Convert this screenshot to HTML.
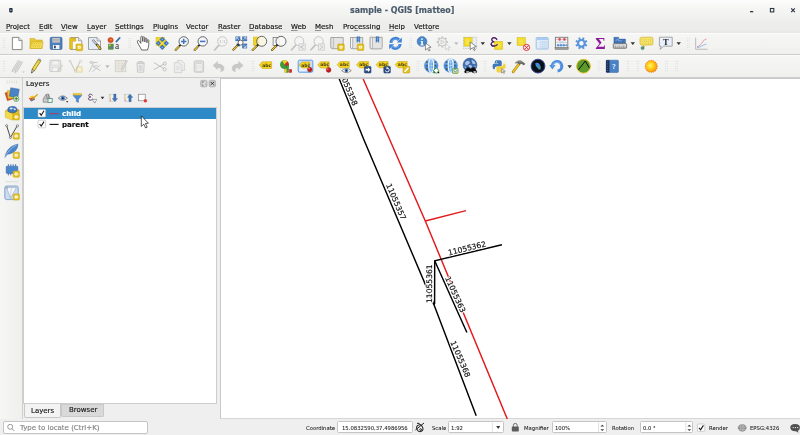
<!DOCTYPE html>
<html><head><meta charset="utf-8"><title>sample - QGIS [matteo]</title>
<style>
*{box-sizing:border-box;margin:0;padding:0}
html,body{width:800px;height:435px;overflow:hidden;background:#efefef;font-family:"DejaVu Sans","Liberation Sans",sans-serif;font-size:7px;color:#1a1a1a}
.abs{position:absolute}
.tx{position:absolute;white-space:nowrap;line-height:1.164;transform:scale(0.41667);transform-origin:0 0;-webkit-text-stroke:0.4px currentColor}
.tx u{text-decoration:underline;text-decoration-thickness:1.2px;text-underline-offset:1.6px}
#title{left:0;top:0;width:800px;height:20px;background:linear-gradient(#fdfdfd,#f6f6f5 40%,#f0f0ef)}
#menu{left:0;top:20px;width:800px;height:12.5px;background:linear-gradient(#eeeeed,#ececeb 80%,#e6e6e5)}
.tb{left:0;width:800px;background:linear-gradient(#f6f6f5,#f0f0ef);border-top:1px solid #fcfcfc;border-bottom:1px solid #cdcdcd}
#tb1{top:32.5px;height:22.8px}
#tb2{top:55.3px;height:22.7px}
#left{left:0;top:78px;width:23px;height:341px;background:linear-gradient(90deg,#f6f6f5,#efefee);border-right:1px solid #cfcfcf}
#canvas{left:220px;top:78px;width:580px;height:341.4px;background:#fff;border-left:1px solid #c8c8c8;border-top:1px solid #c8c8c8;border-bottom:1.4px solid #d6d6d6}
#tree{left:23px;top:107px;width:194px;height:297px;background:#fff;border:1px solid #cdcdcd}
#sel{left:24px;top:108px;width:192px;height:11px;background:#2e89c7}
.box{position:absolute;background:#fff;border:1px solid #c4c4c4;border-radius:1.5px}
</style></head><body><div id="root" style="position:absolute;left:0;top:0;width:800px;height:435px;will-change:transform;transform:translateZ(0)">
<div id="title" class="abs"></div>
<div class="tx" style="left:349.7px;top:5.37px;font-size:18.96px;font-weight:bold;color:#4b5b6c;">sample - QGIS [matteo]</div>
<div id="menu" class="abs"></div>
<div class="tx" style="left:6px;top:22.70px;font-size:16.80px;font-weight:normal;color:#161616;"><u>P</u>roject</div><div class="tx" style="left:39.2px;top:22.70px;font-size:16.80px;font-weight:normal;color:#161616;"><u>E</u>dit</div><div class="tx" style="left:61.4px;top:22.70px;font-size:16.80px;font-weight:normal;color:#161616;"><u>V</u>iew</div><div class="tx" style="left:86.7px;top:22.70px;font-size:16.80px;font-weight:normal;color:#161616;"><u>L</u>ayer</div><div class="tx" style="left:115px;top:22.70px;font-size:16.80px;font-weight:normal;color:#161616;"><u>S</u>ettings</div><div class="tx" style="left:152.5px;top:22.70px;font-size:16.80px;font-weight:normal;color:#161616;"><u>P</u>lugins</div><div class="tx" style="left:186.3px;top:22.70px;font-size:16.80px;font-weight:normal;color:#161616;">Vect<u>o</u>r</div><div class="tx" style="left:217.7px;top:22.70px;font-size:16.80px;font-weight:normal;color:#161616;"><u>R</u>aster</div><div class="tx" style="left:248.8px;top:22.70px;font-size:16.80px;font-weight:normal;color:#161616;"><u>D</u>atabase</div><div class="tx" style="left:291px;top:22.70px;font-size:16.80px;font-weight:normal;color:#161616;"><u>W</u>eb</div><div class="tx" style="left:315.3px;top:22.70px;font-size:16.80px;font-weight:normal;color:#161616;"><u>M</u>esh</div><div class="tx" style="left:342.9px;top:22.70px;font-size:16.80px;font-weight:normal;color:#161616;">Pro<u>c</u>essing</div><div class="tx" style="left:389px;top:22.70px;font-size:16.80px;font-weight:normal;color:#161616;"><u>H</u>elp</div><div class="tx" style="left:414px;top:22.70px;font-size:16.80px;font-weight:normal;color:#161616;">Vett<u>o</u>re</div>
<div id="tb1" class="abs tb"></div>
<div id="tb2" class="abs tb"></div>
<div id="left" class="abs"></div>
<div class="tx" style="left:26px;top:80.01px;font-size:17.04px;font-weight:normal;color:#1a1a1a;">Layers</div>
<div id="tree" class="abs"></div>
<div id="sel" class="abs"></div>
<div class="tx" style="left:62.4px;top:109.71px;font-size:17.04px;font-weight:bold;color:#fff;">child</div>
<div class="tx" style="left:62.4px;top:120.51px;font-size:17.04px;font-weight:bold;color:#111;">parent</div>
<div class="abs" style="left:24px;top:404px;width:37px;height:14.4px;background:#f3f3f3;border:1px solid #c8c8c8;border-top:none;border-radius:0 0 2px 2px"></div>
<div class="abs" style="left:61px;top:404px;width:42.8px;height:12.8px;background:#d9d9d9;border:1px solid #c8c8c8;border-top:1px solid #cccccc;border-radius:0 0 2px 2px"></div>
<div class="tx" style="left:30.6px;top:407.00px;font-size:16.80px;font-weight:normal;color:#1a1a1a;">Layers</div>
<div class="tx" style="left:68.5px;top:406.40px;font-size:16.80px;font-weight:normal;color:#1a1a1a;">Browser</div>
<div id="canvas" class="abs">
<svg width="579" height="340" viewBox="221 79 579 340" style="position:absolute;left:0;top:0">
<g fill="none" stroke-width="1.45" stroke-linecap="butt" stroke-linejoin="miter">
<path d="M363.1 78.8 L425.3 221 L507.3 419" stroke="#e31a1c"/>
<path d="M425.3 221 L466 210.6" stroke="#e31a1c"/>
<path d="M339.2 78.8 L364 140 L433.9 304.6 L476.2 415.8" stroke="#000"/>
<path d="M501.9 244.7 L434.7 260.8 L434.6 303.6 L433.9 304.6" stroke="#000"/>
<path d="M434.7 260.8 L466.9 332.5" stroke="#000"/>
</g>
<g font-family="DejaVu Sans, Liberation Sans, sans-serif" font-size="7.6" fill="#fff" text-anchor="middle" stroke="#fff" stroke-width="2.2" stroke-linejoin="round">
<text transform="translate(348,87.2) rotate(67.4)" y="2.75">11055358</text>
<text transform="translate(396.2,201.7) rotate(66.5)" y="2.75">11055357</text>
<text transform="translate(467,248.2) rotate(-13.5)" y="2.75">11055362</text>
<text transform="translate(428.9,283.7) rotate(-90)" y="2.75">11055361</text>
<text transform="translate(455.6,294.5) rotate(65.6)" y="2.75">11055363</text>
<text transform="translate(460.6,359) rotate(66.5)" y="2.75">11055368</text>
</g>
<g font-family="DejaVu Sans, Liberation Sans, sans-serif" font-size="7.6" fill="#111" text-anchor="middle" stroke="#111" stroke-width="0.18">
<text transform="translate(348,87.2) rotate(67.4)" y="2.75">11055358</text>
<text transform="translate(396.2,201.7) rotate(66.5)" y="2.75">11055357</text>
<text transform="translate(467,248.2) rotate(-13.5)" y="2.75">11055362</text>
<text transform="translate(428.9,283.7) rotate(-90)" y="2.75">11055361</text>
<text transform="translate(455.6,294.5) rotate(65.6)" y="2.75">11055363</text>
<text transform="translate(460.6,359) rotate(66.5)" y="2.75">11055368</text>
</g>
</svg>
</div>
<div class="box" style="left:3px;top:421px;width:145px;height:13px;border-radius:2px"></div>
<div class="box" style="left:337.4px;top:421.4px;width:75.6px;height:11.8px"></div>
<div class="box" style="left:448.4px;top:421.4px;width:56px;height:11.8px"></div>
<div class="box" style="left:551.6px;top:421.4px;width:55px;height:11.8px"></div>
<div class="box" style="left:640.2px;top:421.4px;width:52.8px;height:11.8px"></div>
<div class="tx" style="left:20px;top:423.70px;font-size:16.80px;font-weight:normal;color:#858585;">Type to locate (Ctrl+K)</div><div class="tx" style="left:305.8px;top:424.58px;font-size:12.72px;font-weight:normal;color:#1a1a1a;-webkit-text-stroke:0.15px currentColor;">Coordinate</div><div class="tx" style="left:341.6px;top:424.78px;font-size:12.72px;font-weight:normal;color:#1a1a1a;-webkit-text-stroke:0.15px currentColor;">15.0832590,37.4986956</div><div class="tx" style="left:432px;top:424.58px;font-size:12.72px;font-weight:normal;color:#1a1a1a;-webkit-text-stroke:0.15px currentColor;">Scale</div><div class="tx" style="left:451px;top:424.78px;font-size:12.72px;font-weight:normal;color:#1a1a1a;-webkit-text-stroke:0.15px currentColor;">1:92</div><div class="tx" style="left:524.2px;top:424.58px;font-size:12.72px;font-weight:normal;color:#1a1a1a;-webkit-text-stroke:0.15px currentColor;">Magnifier</div><div class="tx" style="left:555px;top:424.78px;font-size:12.72px;font-weight:normal;color:#1a1a1a;-webkit-text-stroke:0.15px currentColor;">100%</div><div class="tx" style="left:612.4px;top:424.58px;font-size:12.72px;font-weight:normal;color:#1a1a1a;-webkit-text-stroke:0.15px currentColor;">Rotation</div><div class="tx" style="left:643.2px;top:424.78px;font-size:12.72px;font-weight:normal;color:#1a1a1a;-webkit-text-stroke:0.15px currentColor;">0.0 °</div><div class="tx" style="left:708.8px;top:424.58px;font-size:12.72px;font-weight:normal;color:#1a1a1a;-webkit-text-stroke:0.15px currentColor;">Render</div><div class="tx" style="left:749.8px;top:424.58px;font-size:12.72px;font-weight:normal;color:#1a1a1a;-webkit-text-stroke:0.15px currentColor;">EPSG:4326</div>
<svg class="abs" id="icons" width="800" height="435" viewBox="0 0 800 435" style="left:0;top:0;pointer-events:none;filter:blur(0.3px)">
<rect x="3.0" y="38.2" width="0.9" height="0.9" fill="#d2d2d2"/><rect x="4.6" y="38.2" width="0.9" height="0.9" fill="#d2d2d2"/><rect x="3.5" y="38.8" width="0.8" height="0.7" fill="#fbfbfb"/><rect x="5.1" y="38.8" width="0.8" height="0.7" fill="#fbfbfb"/><rect x="3.0" y="40.5" width="0.9" height="0.9" fill="#d2d2d2"/><rect x="4.6" y="40.5" width="0.9" height="0.9" fill="#d2d2d2"/><rect x="3.5" y="41.1" width="0.8" height="0.7" fill="#fbfbfb"/><rect x="5.1" y="41.1" width="0.8" height="0.7" fill="#fbfbfb"/><rect x="3.0" y="42.8" width="0.9" height="0.9" fill="#d2d2d2"/><rect x="4.6" y="42.8" width="0.9" height="0.9" fill="#d2d2d2"/><rect x="3.5" y="43.4" width="0.8" height="0.7" fill="#fbfbfb"/><rect x="5.1" y="43.4" width="0.8" height="0.7" fill="#fbfbfb"/><rect x="3.0" y="45.1" width="0.9" height="0.9" fill="#d2d2d2"/><rect x="4.6" y="45.1" width="0.9" height="0.9" fill="#d2d2d2"/><rect x="3.5" y="45.7" width="0.8" height="0.7" fill="#fbfbfb"/><rect x="5.1" y="45.7" width="0.8" height="0.7" fill="#fbfbfb"/><rect x="3.0" y="47.4" width="0.9" height="0.9" fill="#d2d2d2"/><rect x="4.6" y="47.4" width="0.9" height="0.9" fill="#d2d2d2"/><rect x="3.5" y="48.0" width="0.8" height="0.7" fill="#fbfbfb"/><rect x="5.1" y="48.0" width="0.8" height="0.7" fill="#fbfbfb"/>
<path d="M12.4 37.4 h6.4 l3.2 3.2 v9 h-9.6 z" fill="#fff" stroke="#6f6f6f" stroke-width="0.8" stroke-linejoin="round"/><path d="M18.8 37.4 v3.2 h3.2" fill="#e4e4e4" stroke="#6f6f6f" stroke-width="0.7" stroke-linejoin="round"/>
<path d="M30 38.4 h4.6 l1.2 1.6 h6.4 v8.4 h-12.2 z" fill="#e9c936" stroke="#c4a21a" stroke-width="0.5"/><path d="M29.9 48.5 l1.8 -6.6 h11.5 l-1.6 6.6 z" fill="#f4dc55" stroke="#c4a21a" stroke-width="0.5" stroke-linejoin="round"/><g fill="#cfae2a"><rect x="32.2" y="43.2" width="0.8" height="0.7"/><rect x="31.9" y="44.8" width="0.8" height="0.7"/><rect x="31.5" y="46.4" width="0.8" height="0.7"/><rect x="34.1" y="43.2" width="0.8" height="0.7"/><rect x="33.8" y="44.8" width="0.8" height="0.7"/><rect x="33.4" y="46.4" width="0.8" height="0.7"/><rect x="36.0" y="43.2" width="0.8" height="0.7"/><rect x="35.6" y="44.8" width="0.8" height="0.7"/><rect x="35.3" y="46.4" width="0.8" height="0.7"/><rect x="37.9" y="43.2" width="0.8" height="0.7"/><rect x="37.6" y="44.8" width="0.8" height="0.7"/><rect x="37.2" y="46.4" width="0.8" height="0.7"/><rect x="39.8" y="43.2" width="0.8" height="0.7"/><rect x="39.5" y="44.8" width="0.8" height="0.7"/><rect x="39.1" y="46.4" width="0.8" height="0.7"/></g>
<rect x="50.2" y="37.3" width="11.8" height="12.2" rx="1.3" fill="#4f7fbb" stroke="#3a659c" stroke-width="0.7"/><rect x="52.4" y="38" width="7.4" height="4.6" fill="#cfcfcf"/><line x1="53" y1="39.3" x2="59.2" y2="39.3" stroke="#8f8f8f" stroke-width="0.6"/><line x1="53" y1="40.9" x2="59.2" y2="40.9" stroke="#8f8f8f" stroke-width="0.6"/><rect x="53" y="45" width="6.4" height="4" fill="#f4f4f4"/><rect x="54" y="45.7" width="1.8" height="2.6" fill="#2b466d"/>
<path d="M70.8 37.5 h7.6 l3.4 3.4 v8.6 h-11 z" fill="#fff" stroke="#7a7a7a" stroke-width="0.7"/><path d="M78.4 37.5 v3.4 h3.4" fill="#e6e6e6" stroke="#7a7a7a" stroke-width="0.6"/><path d="M69.6 37.9 h6.2 v3.4 h-3.3 v7.8 h-2.9 z" fill="#e6c325" stroke="#c2a012" stroke-width="0.5"/><g stroke="#b99a10" stroke-width="0.4"><line x1="70" y1="42.5" x2="71" y2="42.5"/><line x1="70" y1="44.7" x2="71" y2="44.7"/><line x1="70" y1="46.9" x2="71" y2="46.9"/><line x1="73.4" y1="38.6" x2="73.4" y2="39.6"/><line x1="74.8" y1="38.6" x2="74.8" y2="39.6"/></g><g opacity="1"><rect x="75.9" y="43.9" width="6.8" height="6.8" rx="0.9" fill="#e2bd18" stroke="#c8a414" stroke-width="0.5"/><polygon points="81.56,48.24 80.18,48.18 80.24,49.56 79.30,48.55 78.36,49.56 78.42,48.18 77.04,48.24 78.05,47.30 77.04,46.36 78.42,46.42 78.36,45.04 79.30,46.05 80.24,45.04 80.18,46.42 81.56,46.36 80.55,47.30" fill="#fffbe6"/><circle cx="79.30000000000001" cy="47.3" r="0.6" fill="#ecd460"/></g>
<path d="M88.5 37.6 h8.6 l3.4 3.4 v8.4 h-12 z" fill="#f0f5fb" stroke="#7a7a7a" stroke-width="0.7"/><path d="M97.1 37.6 v3.4 h3.4" fill="#dfe6ee" stroke="#7a7a7a" stroke-width="0.6"/><rect x="89.6" y="39" width="6" height="8.8" fill="#e1ecf8"/><line x1="93.4" y1="40.6" x2="97.2" y2="45" stroke="#555" stroke-width="2.2" stroke-linecap="round"/><line x1="93.4" y1="40.6" x2="97.2" y2="45" stroke="#e9e9e9" stroke-width="1.1" stroke-linecap="round"/><line x1="97.2" y1="45" x2="100.2" y2="48.8" stroke="#3b3b2a" stroke-width="2.5" stroke-linecap="round"/><line x1="97.4" y1="45.2" x2="100.1" y2="48.7" stroke="#e6bf1f" stroke-width="1.4" stroke-linecap="round"/>
<circle cx="110.6" cy="40.1" r="2.7" fill="#d8531f" stroke="#b03c10" stroke-width="0.4"/><circle cx="110.9" cy="39.8" r="0.8" fill="#f0a060"/><line x1="116.3" y1="41.6" x2="119.7" y2="37.9" stroke="#3e6fb2" stroke-width="1.7" stroke-linecap="round"/><rect x="108.2" y="44" width="5.2" height="5.3" fill="#5f9448" stroke="#4a7a3a" stroke-width="0.4"/><rect x="108.8" y="44.5" width="1.8" height="1.6" fill="#d8c84a"/><rect x="111" y="46.6" width="1.8" height="1.8" fill="#4a78b8"/><text x="115" y="49.1" font-size="9.4" font-family="Liberation Serif, serif" fill="#2a2a2a">a</text>
<rect x="128.6" y="38.2" width="0.9" height="0.9" fill="#d2d2d2"/><rect x="130.2" y="38.2" width="0.9" height="0.9" fill="#d2d2d2"/><rect x="129.1" y="38.8" width="0.8" height="0.7" fill="#fbfbfb"/><rect x="130.7" y="38.8" width="0.8" height="0.7" fill="#fbfbfb"/><rect x="128.6" y="40.5" width="0.9" height="0.9" fill="#d2d2d2"/><rect x="130.2" y="40.5" width="0.9" height="0.9" fill="#d2d2d2"/><rect x="129.1" y="41.1" width="0.8" height="0.7" fill="#fbfbfb"/><rect x="130.7" y="41.1" width="0.8" height="0.7" fill="#fbfbfb"/><rect x="128.6" y="42.8" width="0.9" height="0.9" fill="#d2d2d2"/><rect x="130.2" y="42.8" width="0.9" height="0.9" fill="#d2d2d2"/><rect x="129.1" y="43.4" width="0.8" height="0.7" fill="#fbfbfb"/><rect x="130.7" y="43.4" width="0.8" height="0.7" fill="#fbfbfb"/><rect x="128.6" y="45.1" width="0.9" height="0.9" fill="#d2d2d2"/><rect x="130.2" y="45.1" width="0.9" height="0.9" fill="#d2d2d2"/><rect x="129.1" y="45.7" width="0.8" height="0.7" fill="#fbfbfb"/><rect x="130.7" y="45.7" width="0.8" height="0.7" fill="#fbfbfb"/><rect x="128.6" y="47.4" width="0.9" height="0.9" fill="#d2d2d2"/><rect x="130.2" y="47.4" width="0.9" height="0.9" fill="#d2d2d2"/><rect x="129.1" y="48.0" width="0.8" height="0.7" fill="#fbfbfb"/><rect x="130.7" y="48.0" width="0.8" height="0.7" fill="#fbfbfb"/>
<path d="M141.6 50 C141 48 139.6 46.4 138.4 44.2 C137.4 42.4 137 41 137.8 40.5 C138.6 40 139.6 41 140.8 43.4 L140.8 37.2 C140.8 36 142.6 36 142.6 37.2 L142.8 41.6 L142.9 37.6 C142.9 36.4 144.7 36.5 144.7 37.7 L144.9 42 L145.1 38.8 C145.2 37.7 146.8 37.8 146.8 38.9 L146.9 42.8 L147.2 40.4 C147.3 39.3 148.8 39.5 148.8 40.6 C148.8 44 148.9 47 147.4 50 Z" fill="#fff" stroke="#454545" stroke-width="0.8" stroke-linejoin="round"/>
<rect x="156" y="37.2" width="8.6" height="8.4" fill="#f0d42a" stroke="#d2b21e" stroke-width="0.4"/><path d="M162.3 36.7 L169 43.3 L162.3 50.1 L155.7 43.3 Z" fill="#3f74b8"/><path d="M159 40 L165.6 46.6 M165.6 40 L159 46.6" stroke="#f0d42a" stroke-width="1.7"/><path d="M162.3 41.5 l1.8 1.8 l-1.8 1.8 l-1.8 -1.8 z" fill="#f4dc3a"/><g fill="#8fb4e4"><circle cx="162.3" cy="39.2" r="0.7"/><circle cx="162.3" cy="47.5" r="0.7"/><circle cx="158.2" cy="43.3" r="0.7"/><circle cx="166.5" cy="43.3" r="0.7"/></g>
<line x1="180.5" y1="44.8" x2="175.6" y2="50.0" stroke="#222" stroke-width="1.9" stroke-linecap="round"/><line x1="179.0" y1="46.4" x2="175.6" y2="50.0" stroke="#edc31f" stroke-width="1.3" stroke-linecap="round"/><circle cx="183.7" cy="41.4" r="4.7" fill="#f3f7fb" stroke="#454545" stroke-width="0.8"/><path d="M181 41.4 h5.4 M183.7 38.7 v5.4" stroke="#3f74b8" stroke-width="1.5"/>
<line x1="199.5" y1="44.8" x2="194.6" y2="50.0" stroke="#222" stroke-width="1.9" stroke-linecap="round"/><line x1="198.0" y1="46.4" x2="194.6" y2="50.0" stroke="#edc31f" stroke-width="1.3" stroke-linecap="round"/><circle cx="202.7" cy="41.4" r="4.7" fill="#f3f7fb" stroke="#454545" stroke-width="0.8"/><path d="M200 41.4 h5.4" stroke="#3f74b8" stroke-width="1.5"/>
<line x1="219.2" y1="44.9" x2="214.6" y2="50.0" stroke="#c2c2c2" stroke-width="1.7" stroke-linecap="round"/><circle cx="222.3" cy="41.4" r="4.7" fill="#f4f4f4" stroke="#bdbdbd" stroke-width="0.8"/><text x="222.3" y="43" font-size="4.2" text-anchor="middle" fill="#b4b4b4" font-family="DejaVu Sans, Liberation Sans, sans-serif">1:1</text>
<g fill="#3f74b8"><rect x="235.4" y="36.4" width="4.9" height="4.7"/><rect x="242.2" y="36.4" width="4.9" height="4.7"/><rect x="242.2" y="43.6" width="4.9" height="4.8"/><rect x="236.6" y="43.6" width="3.4" height="2.6"/></g><g stroke="#dfe9f5" stroke-width="0.7" fill="none"><path d="M236.3 39.6 v-2.3 h2.3 M236.5 37.5 l2.6 2.4"/><path d="M246.1 39.6 v-2.3 h-2.3 M245.9 37.5 l-2.6 2.4"/><path d="M246.1 45.2 v2.3 h-2.3 M245.9 47.3 l-2.6 -2.4"/></g><line x1="238.8" y1="44.3" x2="233.3" y2="49.7" stroke="#222" stroke-width="1.9" stroke-linecap="round"/><line x1="237.2" y1="46.0" x2="233.3" y2="49.7" stroke="#edc31f" stroke-width="1.3" stroke-linecap="round"/><circle cx="240.6" cy="42.6" r="2.5" fill="#ffffff" stroke="#454545" stroke-width="0.8"/>
<rect x="253.3" y="37" width="6" height="8.6" fill="#f0d42a" stroke="#c9a91a" stroke-width="0.4"/><line x1="258.1" y1="44.8" x2="252.6" y2="50.0" stroke="#222" stroke-width="1.9" stroke-linecap="round"/><line x1="256.4" y1="46.3" x2="252.6" y2="50.0" stroke="#edc31f" stroke-width="1.3" stroke-linecap="round"/><circle cx="261.7" cy="41.3" r="5" fill="rgba(250,246,225,0.82)" stroke="#454545" stroke-width="0.8"/>
<rect x="273.1" y="37.5" width="6" height="8" fill="#f4f4f4" stroke="#6a6a6a" stroke-width="0.7"/><line x1="277.4" y1="44.8" x2="272.0" y2="50.0" stroke="#222" stroke-width="1.9" stroke-linecap="round"/><line x1="275.8" y1="46.3" x2="272.0" y2="50.0" stroke="#edc31f" stroke-width="1.3" stroke-linecap="round"/><circle cx="281" cy="41.3" r="5" fill="rgba(248,248,248,0.85)" stroke="#454545" stroke-width="0.8"/>
<line x1="296.2" y1="44.6" x2="291.6" y2="49.8" stroke="#c2c2c2" stroke-width="1.7" stroke-linecap="round"/><circle cx="299.2" cy="41.2" r="4.6" fill="#f4f4f4" stroke="#bdbdbd" stroke-width="0.8"/><rect x="299" y="43.9" width="6.2" height="6.2" fill="#ececec" stroke="#c0c0c0" stroke-width="0.6"/><path d="M303.6 45.2 l-3 1.8 l3 1.8" fill="none" stroke="#b8b8b8" stroke-width="0.9"/>
<line x1="315.6" y1="44.6" x2="311.0" y2="49.8" stroke="#c2c2c2" stroke-width="1.7" stroke-linecap="round"/><circle cx="318.6" cy="41.2" r="4.6" fill="#f4f4f4" stroke="#bdbdbd" stroke-width="0.8"/><rect x="318.4" y="43.9" width="6.2" height="6.2" fill="#ececec" stroke="#c0c0c0" stroke-width="0.6"/><path d="M320 45.2 l3 1.8 l-3 1.8" fill="none" stroke="#c6c6c6" stroke-width="0.9"/>
<path d="M331 37.5 h12.2 v9.6 q0 1.6 -1.6 1.6 h-9.0 q-1.6 0 -1.6 -1.6 z" fill="#e4e4e4" stroke="#8b8b8b" stroke-width="0.7"/><path d="M331 37.5 h2.2 v9.399999999999999 q0 1.6 -1.1 1.6 q-1.1 0 -1.1 -1.6 z" fill="#f6f6f6" stroke="#8b8b8b" stroke-width="0.6"/><g opacity="1"><rect x="337.7" y="43.9" width="6.6" height="6.6" rx="0.9" fill="#e2bd18" stroke="#c8a414" stroke-width="0.5"/><polygon points="343.26,48.14 341.88,48.08 341.94,49.46 341.00,48.45 340.06,49.46 340.12,48.08 338.74,48.14 339.75,47.20 338.74,46.26 340.12,46.32 340.06,44.94 341.00,45.95 341.94,44.94 341.88,46.32 343.26,46.26 342.25,47.20" fill="#fffbe6"/><circle cx="341.0" cy="47.199999999999996" r="0.6" fill="#ecd460"/></g>
<path d="M350.5 37.5 h12.2 v9.6 q0 1.6 -1.6 1.6 h-9.0 q-1.6 0 -1.6 -1.6 z" fill="#e4e4e4" stroke="#8b8b8b" stroke-width="0.7"/><path d="M350.5 37.5 h2.2 v9.399999999999999 q0 1.6 -1.1 1.6 q-1.1 0 -1.1 -1.6 z" fill="#f6f6f6" stroke="#8b8b8b" stroke-width="0.6"/><path d="M356.9 36.8 h2.9 v5.6 l-1.45 -1.4 l-1.45 1.4 z" fill="#3f7fc8" stroke="#2a5c9c" stroke-width="0.4"/><line x1="358.34999999999997" y1="37.4" x2="358.34999999999997" y2="40.4" stroke="#9cc2ea" stroke-width="0.6"/><g opacity="1"><rect x="357.2" y="43.9" width="6.6" height="6.6" rx="0.9" fill="#e2bd18" stroke="#c8a414" stroke-width="0.5"/><polygon points="362.76,48.14 361.38,48.08 361.44,49.46 360.50,48.45 359.56,49.46 359.62,48.08 358.24,48.14 359.25,47.20 358.24,46.26 359.62,46.32 359.56,44.94 360.50,45.95 361.44,44.94 361.38,46.32 362.76,46.26 361.75,47.20" fill="#fffbe6"/><circle cx="360.5" cy="47.199999999999996" r="0.6" fill="#ecd460"/></g>
<path d="M370.2 37.3 h12 v10.0 q0 1.6 -1.6 1.6 h-8.8 q-1.6 0 -1.6 -1.6 z" fill="#e4e4e4" stroke="#8b8b8b" stroke-width="0.7"/><path d="M370.2 37.3 h2.2 v9.799999999999999 q0 1.6 -1.1 1.6 q-1.1 0 -1.1 -1.6 z" fill="#f6f6f6" stroke="#8b8b8b" stroke-width="0.6"/><path d="M376 36.8 h2.9 v5.6 l-1.45 -1.4 l-1.45 1.4 z" fill="#3f7fc8" stroke="#2a5c9c" stroke-width="0.4"/><line x1="377.45" y1="37.4" x2="377.45" y2="40.4" stroke="#9cc2ea" stroke-width="0.6"/>
<g fill="none" stroke="#3d82d6" stroke-width="3"><path d="M390.9 42.8 A4.7 4.7 0 0 1 399 39.9"/><path d="M400.1 44 A4.7 4.7 0 0 1 392 46.9"/></g><path d="M401.8 37.6 v5 h-5 z" fill="#3d82d6"/><path d="M389.2 49.2 v-5 h5 z" fill="#3d82d6"/><g fill="none" stroke="#8cb8ec" stroke-width="0.7"><path d="M391.6 42 A4 4 0 0 1 398 40"/><path d="M399.4 44.8 A4 4 0 0 1 393 46.8"/></g>
<rect x="409.6" y="38.2" width="0.9" height="0.9" fill="#d2d2d2"/><rect x="411.2" y="38.2" width="0.9" height="0.9" fill="#d2d2d2"/><rect x="410.1" y="38.8" width="0.8" height="0.7" fill="#fbfbfb"/><rect x="411.7" y="38.8" width="0.8" height="0.7" fill="#fbfbfb"/><rect x="409.6" y="40.5" width="0.9" height="0.9" fill="#d2d2d2"/><rect x="411.2" y="40.5" width="0.9" height="0.9" fill="#d2d2d2"/><rect x="410.1" y="41.1" width="0.8" height="0.7" fill="#fbfbfb"/><rect x="411.7" y="41.1" width="0.8" height="0.7" fill="#fbfbfb"/><rect x="409.6" y="42.8" width="0.9" height="0.9" fill="#d2d2d2"/><rect x="411.2" y="42.8" width="0.9" height="0.9" fill="#d2d2d2"/><rect x="410.1" y="43.4" width="0.8" height="0.7" fill="#fbfbfb"/><rect x="411.7" y="43.4" width="0.8" height="0.7" fill="#fbfbfb"/><rect x="409.6" y="45.1" width="0.9" height="0.9" fill="#d2d2d2"/><rect x="411.2" y="45.1" width="0.9" height="0.9" fill="#d2d2d2"/><rect x="410.1" y="45.7" width="0.8" height="0.7" fill="#fbfbfb"/><rect x="411.7" y="45.7" width="0.8" height="0.7" fill="#fbfbfb"/><rect x="409.6" y="47.4" width="0.9" height="0.9" fill="#d2d2d2"/><rect x="411.2" y="47.4" width="0.9" height="0.9" fill="#d2d2d2"/><rect x="410.1" y="48.0" width="0.8" height="0.7" fill="#fbfbfb"/><rect x="411.7" y="48.0" width="0.8" height="0.7" fill="#fbfbfb"/>
<circle cx="422" cy="41.5" r="4.9" fill="#4a88cc" stroke="#2f66a8" stroke-width="0.5"/><circle cx="422" cy="39.1" r="0.9" fill="#fff"/><path d="M420.9 40.9 h1.9 v3.6 h0.8 v0.9 h-3.2 v-0.9 h0.9 v-2.7 h-0.9 z" fill="#fff"/><path d="M425.3 43 l5.8 4.2 l-2.6 0.5 l1.6 2.6 l-1.2 0.7 l-1.6 -2.7 l-1.8 1.8 z" fill="#fff" stroke="#4a4a4a" stroke-width="0.6" stroke-linejoin="round"/>
<line x1="445.9" y1="42.0" x2="447.9" y2="42.0" stroke="#c6c6c6" stroke-width="2"/><line x1="444.8" y1="44.5" x2="446.3" y2="46.0" stroke="#c6c6c6" stroke-width="2"/><line x1="442.3" y1="45.6" x2="442.3" y2="47.6" stroke="#c6c6c6" stroke-width="2"/><line x1="439.8" y1="44.5" x2="438.3" y2="46.0" stroke="#c6c6c6" stroke-width="2"/><line x1="438.7" y1="42.0" x2="436.7" y2="42.0" stroke="#c6c6c6" stroke-width="2"/><line x1="439.8" y1="39.5" x2="438.3" y2="38.0" stroke="#c6c6c6" stroke-width="2"/><line x1="442.3" y1="38.4" x2="442.3" y2="36.4" stroke="#c6c6c6" stroke-width="2"/><line x1="444.8" y1="39.5" x2="446.3" y2="38.0" stroke="#c6c6c6" stroke-width="2"/><circle cx="442.3" cy="42" r="4" fill="#f1f1f1" stroke="#c2c2c2" stroke-width="0.9"/><path d="M441 40 l3.2 2 l-3.2 2 z" fill="none" stroke="#c0c0c0" stroke-width="0.6"/><path d="M445.3 43.6 l5 3.8 l-2.3 0.4 l1.4 2.2 l-1 0.6 l-1.4 -2.3 l-1.6 1.5 z" fill="#f6f6f6" stroke="#c0c0c0" stroke-width="0.6"/><path d="M454.1 42.2 h4.4 L456.3 45.1 z" fill="#bdbdbd"/>
<rect x="463.6" y="37.3" width="13" height="11.2" fill="#e9eef5" stroke="#9a9a9a" stroke-width="0.5" stroke-dasharray="0.9 0.7"/><rect x="464" y="37.5" width="8.1" height="8.6" fill="#f3dc24" stroke="#d2b81e" stroke-width="0.5"/><rect x="465.5" y="39" width="3.6" height="5.4" fill="#f7e352"/><path d="M470.1 42 l6.3 4.6 l-2.8 0.5 l1.7 2.8 l-1.2 0.7 l-1.7 -2.9 l-2.1 2 z" fill="#fff" stroke="#4a4a4a" stroke-width="0.6" stroke-linejoin="round"/><path d="M480.6 42.2 h4.4 L482.8 45.1 z" fill="#333"/>
<path d="M496.8 39.4 C495.6 37.2 491.6 37.2 491.8 39.8 C491.9 41.4 493.6 41.7 494.8 41.6 C493 41.7 491 42.4 491.2 44.3 C491.5 46.8 495.8 46.6 497.4 44.4" fill="none" stroke="#fbfbfb" stroke-width="2.6" stroke-linecap="round"/><path d="M496.8 39.4 C495.6 37.2 491.6 37.2 491.8 39.8 C491.9 41.4 493.6 41.7 494.8 41.6 C493 41.7 491 42.4 491.2 44.3 C491.5 46.8 495.8 46.6 497.4 44.4" fill="none" stroke="#4a1a62" stroke-width="1.4" stroke-linecap="round"/><rect x="494.5" y="41.4" width="8.2" height="8" fill="#f3dc24" stroke="#d2b81e" stroke-width="0.5"/><rect x="496" y="42.9" width="4.6" height="4.6" fill="#f7e352" opacity="0.8"/><path d="M491.3 44.4 C491.6 46.6 495.6 46.6 497.2 44.6" fill="none" stroke="#4a1a62" stroke-width="1.3" stroke-linecap="round"/><path d="M507.2 42.2 h4.4 L509.4 45.1 z" fill="#333"/>
<rect x="517.1" y="37.6" width="8.2" height="8" fill="#f3dc24" stroke="#d2b81e" stroke-width="0.5"/><rect x="518.8" y="39.2" width="4.6" height="4.6" fill="#f7e352" opacity="0.8"/><circle cx="526.5" cy="47.4" r="3.1" fill="#fbeaea" stroke="#d9262c" stroke-width="0.9"/><path d="M524.5 45.4 l4 4 M528.5 45.4 l-4 4" stroke="#d9262c" stroke-width="0.9"/>
<rect x="536.2" y="37.6" width="12" height="11.4" rx="0.6" fill="#eef4fb" stroke="#7aaae0" stroke-width="0.7"/><rect x="536.6" y="38" width="11.2" height="2.2" fill="#a9c9ee"/><g stroke="#b4d0f0" stroke-width="0.5"><line x1="536.4" y1="42.6" x2="548" y2="42.6"/><line x1="536.4" y1="44.8" x2="548" y2="44.8"/><line x1="536.4" y1="47" x2="548" y2="47"/><line x1="540.4" y1="38" x2="540.4" y2="49"/></g><g stroke="#7fa6d6" stroke-width="0.6" stroke-dasharray="1.2 0.7"><line x1="541.6" y1="41.6" x2="547" y2="41.6"/><line x1="541.6" y1="43.8" x2="547" y2="43.8"/><line x1="541.6" y1="46" x2="547" y2="46"/><line x1="541.6" y1="48" x2="547" y2="48"/></g>
<rect x="555.4" y="37.3" width="12.4" height="10.6" fill="#f4f4f4" stroke="#7b7b7b" stroke-width="0.9"/><rect x="555" y="47.6" width="13.2" height="2" fill="#9a9a9a" stroke="#6f6f6f" stroke-width="0.4"/><g stroke="#9a9a9a" stroke-width="0.4"><line x1="556" y1="39.4" x2="567.4" y2="39.4"/><line x1="556" y1="42.4" x2="567.4" y2="42.4"/><line x1="556" y1="45.3" x2="567.4" y2="45.3"/></g><circle cx="559.6" cy="39.4" r="1.3" fill="#e2474a"/><circle cx="564.4" cy="39.4" r="1.3" fill="#e2474a"/><circle cx="560.4" cy="42.4" r="1.1" fill="#b9d2ee"/><circle cx="562.8" cy="42.4" r="1.1" fill="#b9d2ee"/><circle cx="558.2" cy="45.3" r="1.2" fill="#5b93d6"/><circle cx="561" cy="45.3" r="1.2" fill="#5b93d6"/><circle cx="563.8" cy="45.3" r="1.2" fill="#5b93d6"/><circle cx="566.3" cy="45.3" r="1" fill="#5b93d6"/>
<line x1="584.7" y1="44.7" x2="587.0" y2="45.6" stroke="#5a95dc" stroke-width="2" stroke-linecap="butt"/><line x1="582.8" y1="46.6" x2="583.7" y2="48.9" stroke="#5a95dc" stroke-width="2" stroke-linecap="butt"/><line x1="580.0" y1="46.6" x2="579.1" y2="48.9" stroke="#5a95dc" stroke-width="2" stroke-linecap="butt"/><line x1="578.1" y1="44.7" x2="575.8" y2="45.6" stroke="#5a95dc" stroke-width="2" stroke-linecap="butt"/><line x1="578.1" y1="41.9" x2="575.8" y2="41.0" stroke="#5a95dc" stroke-width="2" stroke-linecap="butt"/><line x1="580.0" y1="40.0" x2="579.1" y2="37.7" stroke="#5a95dc" stroke-width="2" stroke-linecap="butt"/><line x1="582.8" y1="40.0" x2="583.7" y2="37.7" stroke="#5a95dc" stroke-width="2" stroke-linecap="butt"/><line x1="584.7" y1="41.9" x2="587.0" y2="41.0" stroke="#5a95dc" stroke-width="2" stroke-linecap="butt"/><circle cx="581.4" cy="43.3" r="3.3" fill="none" stroke="#5a95dc" stroke-width="2.2"/><circle cx="581.4" cy="43.3" r="1.7" fill="#f2f6fb"/>
<text x="600.6" y="49" font-size="16" font-weight="bold" text-anchor="middle" fill="#8d1a9c" font-family="Liberation Serif, serif">Σ</text>
<path d="M613.9 37.3 h4.8 v1.8 h6.8 v4.2 h-11.6 z" fill="#3f74b8" stroke="#2a5796" stroke-width="0.4"/><path d="M615.4 40.2 h1.6 v-1 h1.4 v1.6 h3.4" fill="none" stroke="#a9c6ea" stroke-width="0.6"/><rect x="613.3" y="43.6" width="13.3" height="4.7" rx="0.7" fill="#dcdcdc" stroke="#555" stroke-width="0.7"/><g stroke="#555" stroke-width="0.55"><line x1="615.2" y1="45.6" x2="615.2" y2="48"/><line x1="617.2" y1="46.4" x2="617.2" y2="48"/><line x1="619.2" y1="45.6" x2="619.2" y2="48"/><line x1="621.2" y1="46.4" x2="621.2" y2="48"/><line x1="623.2" y1="45.6" x2="623.2" y2="48"/><line x1="625" y1="46.4" x2="625" y2="48"/></g><path d="M630.6 42.2 h4.4 L632.8 45.1 z" fill="#333"/>
<path d="M641.6 37.2 h9.8 q1.6 0 1.6 1.6 v4.6 q0 1.6 -1.6 1.6 h-5.6 l-2.6 2.8 l0.2 -2.8 h-1.8 q-1.6 0 -1.6 -1.6 v-4.6 q0 -1.6 1.6 -1.6 z" fill="#f5e26a" stroke="#c9aa1e" stroke-width="0.6"/><g fill="#d8bf3a"><rect x="642.4" y="39.4" width="0.8" height="0.8"/><rect x="642.4" y="41.2" width="0.8" height="0.8"/><rect x="642.4" y="43.0" width="0.8" height="0.8"/><rect x="644.3" y="39.4" width="0.8" height="0.8"/><rect x="644.3" y="41.2" width="0.8" height="0.8"/><rect x="644.3" y="43.0" width="0.8" height="0.8"/><rect x="646.2" y="39.4" width="0.8" height="0.8"/><rect x="646.2" y="41.2" width="0.8" height="0.8"/><rect x="646.2" y="43.0" width="0.8" height="0.8"/><rect x="648.1" y="39.4" width="0.8" height="0.8"/><rect x="648.1" y="41.2" width="0.8" height="0.8"/><rect x="648.1" y="43.0" width="0.8" height="0.8"/><rect x="650.0" y="39.4" width="0.8" height="0.8"/><rect x="650.0" y="41.2" width="0.8" height="0.8"/><rect x="650.0" y="43.0" width="0.8" height="0.8"/></g><circle cx="642.6" cy="48" r="1.6" fill="#5d9a56" stroke="#3b6fa8" stroke-width="0.5"/>
<path d="M659.4 37.2 h12.8 v9 h-8.4 l-3.8 3.2 l1.2 -3.2 h-1.8 z" fill="#e9f1fa" stroke="#858585" stroke-width="0.7" stroke-linejoin="round"/><text x="665.8" y="45.3" font-size="8.6" font-weight="bold" text-anchor="middle" fill="#1f1f1f" font-family="Liberation Serif, serif">T</text><path d="M676.5 42.2 h4.4 L678.7 45.1 z" fill="#333"/>
<rect x="687.2" y="38.2" width="0.9" height="0.9" fill="#d2d2d2"/><rect x="688.8" y="38.2" width="0.9" height="0.9" fill="#d2d2d2"/><rect x="687.7" y="38.8" width="0.8" height="0.7" fill="#fbfbfb"/><rect x="689.3" y="38.8" width="0.8" height="0.7" fill="#fbfbfb"/><rect x="687.2" y="40.5" width="0.9" height="0.9" fill="#d2d2d2"/><rect x="688.8" y="40.5" width="0.9" height="0.9" fill="#d2d2d2"/><rect x="687.7" y="41.1" width="0.8" height="0.7" fill="#fbfbfb"/><rect x="689.3" y="41.1" width="0.8" height="0.7" fill="#fbfbfb"/><rect x="687.2" y="42.8" width="0.9" height="0.9" fill="#d2d2d2"/><rect x="688.8" y="42.8" width="0.9" height="0.9" fill="#d2d2d2"/><rect x="687.7" y="43.4" width="0.8" height="0.7" fill="#fbfbfb"/><rect x="689.3" y="43.4" width="0.8" height="0.7" fill="#fbfbfb"/><rect x="687.2" y="45.1" width="0.9" height="0.9" fill="#d2d2d2"/><rect x="688.8" y="45.1" width="0.9" height="0.9" fill="#d2d2d2"/><rect x="687.7" y="45.7" width="0.8" height="0.7" fill="#fbfbfb"/><rect x="689.3" y="45.7" width="0.8" height="0.7" fill="#fbfbfb"/><rect x="687.2" y="47.4" width="0.9" height="0.9" fill="#d2d2d2"/><rect x="688.8" y="47.4" width="0.9" height="0.9" fill="#d2d2d2"/><rect x="687.7" y="48.0" width="0.8" height="0.7" fill="#fbfbfb"/><rect x="689.3" y="48.0" width="0.8" height="0.7" fill="#fbfbfb"/>
<path d="M695.6 37.6 V49.3 H707.6" fill="none" stroke="#a9a9a9" stroke-width="0.7"/><g stroke="#bdbdbd" stroke-width="0.4"><line x1="695.6" y1="40" x2="696.6" y2="40"/><line x1="695.6" y1="43" x2="696.6" y2="43"/><line x1="695.6" y1="46" x2="696.6" y2="46"/><line x1="699" y1="49.3" x2="699" y2="48.4"/><line x1="702" y1="49.3" x2="702" y2="48.4"/><line x1="705" y1="49.3" x2="705" y2="48.4"/></g><path d="M697 46.6 C699.5 46.6 700 44.6 701.5 43.4 C703 42.2 703.6 39.4 706.4 39" fill="none" stroke="#de6a78" stroke-width="0.7"/><path d="M697 47.7 C699.5 47.7 700.4 46.4 702 45.8 C703.8 45.1 704.8 44.2 706.4 44" fill="none" stroke="#6aa2e8" stroke-width="0.7"/>
<rect x="3.0" y="61.2" width="0.9" height="0.9" fill="#d2d2d2"/><rect x="4.6" y="61.2" width="0.9" height="0.9" fill="#d2d2d2"/><rect x="3.5" y="61.8" width="0.8" height="0.7" fill="#fbfbfb"/><rect x="5.1" y="61.8" width="0.8" height="0.7" fill="#fbfbfb"/><rect x="3.0" y="63.5" width="0.9" height="0.9" fill="#d2d2d2"/><rect x="4.6" y="63.5" width="0.9" height="0.9" fill="#d2d2d2"/><rect x="3.5" y="64.1" width="0.8" height="0.7" fill="#fbfbfb"/><rect x="5.1" y="64.1" width="0.8" height="0.7" fill="#fbfbfb"/><rect x="3.0" y="65.8" width="0.9" height="0.9" fill="#d2d2d2"/><rect x="4.6" y="65.8" width="0.9" height="0.9" fill="#d2d2d2"/><rect x="3.5" y="66.4" width="0.8" height="0.7" fill="#fbfbfb"/><rect x="5.1" y="66.4" width="0.8" height="0.7" fill="#fbfbfb"/><rect x="3.0" y="68.1" width="0.9" height="0.9" fill="#d2d2d2"/><rect x="4.6" y="68.1" width="0.9" height="0.9" fill="#d2d2d2"/><rect x="3.5" y="68.7" width="0.8" height="0.7" fill="#fbfbfb"/><rect x="5.1" y="68.7" width="0.8" height="0.7" fill="#fbfbfb"/><rect x="3.0" y="70.4" width="0.9" height="0.9" fill="#d2d2d2"/><rect x="4.6" y="70.4" width="0.9" height="0.9" fill="#d2d2d2"/><rect x="3.5" y="71.0" width="0.8" height="0.7" fill="#fbfbfb"/><rect x="5.1" y="71.0" width="0.8" height="0.7" fill="#fbfbfb"/>
<g stroke="#c8c8c8" stroke-width="2.6" stroke-linecap="butt"><line x1="19.2" y1="60.6" x2="13.2" y2="70.2"/><line x1="22" y1="61.6" x2="16" y2="71.2"/></g><g stroke="#e4e4e4" stroke-width="1"><line x1="19.2" y1="60.6" x2="13.2" y2="70.2"/><line x1="22" y1="61.6" x2="16" y2="71.2"/></g><path d="M12.2 69.6 l-0.8 2.8 l2.6 -1.6 z M15 70.6 l-0.8 2.8 l2.6 -1.6 z" fill="#c2c2c2"/><path d="M22.2 71.5 h2.4 L23.4 73.1 z" fill="#c4c4c4"/>
<path d="M38.2 59.6 l2.5 1.5 l-6.2 9.6 l-2.5 -1.5 z" fill="#f1d327" stroke="#6a5a10" stroke-width="0.6" stroke-linejoin="round"/><path d="M36.9 61.6 l2.5 1.5" stroke="#9a8a40" stroke-width="0.5"/><line x1="38.9" y1="61.4" x2="33.4" y2="69.9" stroke="#f8ea7a" stroke-width="0.7"/><path d="M32 69.2 l2.5 1.5 l-3.1 2.4 z" fill="#d9c7a0" stroke="#4a4a4a" stroke-width="0.5" stroke-linejoin="round"/><path d="M31.4 73.1 l0.4 -1.5 l1 0.6 z" fill="#222"/><path d="M38.2 59.6 l2.5 1.5 l0.5 -0.9 q-0.9 -1.4 -2.4 -1.4 z" fill="#c8c8c8" stroke="#5a5a5a" stroke-width="0.4"/>
<rect x="49.8" y="60.2" width="11" height="11.4" rx="1.2" fill="#e6e6e6" stroke="#c2c2c2" stroke-width="0.8"/><rect x="52" y="61" width="6.6" height="4" fill="#f3f3f3" stroke="#c8c8c8" stroke-width="0.4"/><rect x="52.4" y="67.4" width="5.8" height="4" fill="#f3f3f3" stroke="#c8c8c8" stroke-width="0.4"/><line x1="62.2" y1="65" x2="57.6" y2="71" stroke="#c8c8c8" stroke-width="1.8"/><line x1="62.2" y1="65" x2="57.6" y2="71" stroke="#eadfca" stroke-width="0.8"/>
<path d="M70 61 L75.4 71.6 L80 61.6" fill="none" stroke="#c2c2c2" stroke-width="1"/><g fill="#f4f4f4" stroke="#c2c2c2" stroke-width="0.6"><circle cx="70" cy="61.2" r="1"/><circle cx="80.6" cy="61.4" r="1.1"/><circle cx="75.4" cy="71.4" r="1"/></g><g opacity="0.3"><rect x="76.2" y="66.4" width="6.2" height="6.2" rx="0.9" fill="#e2bd18" stroke="#c8a414" stroke-width="0.5"/><polygon points="81.56,70.44 80.18,70.38 80.24,71.76 79.30,70.75 78.36,71.76 78.42,70.38 77.04,70.44 78.05,69.50 77.04,68.56 78.42,68.62 78.36,67.24 79.30,68.25 80.24,67.24 80.18,68.62 81.56,68.56 80.55,69.50" fill="#fffbe6"/><circle cx="79.3" cy="69.5" r="0.6" fill="#ecd460"/></g>
<g stroke="#c2c2c2" stroke-width="0.9" fill="none"><path d="M91.4 60.8 v3.2 M89.4 62.4 h8"/><path d="M93.8 62.4 L89.2 72"/><path d="M93 66.6 l7.6 4 M100.4 65 l-8 6.6"/><path d="M92.6 66.2 l5 -0.6"/></g><rect x="90.4" y="61.2" width="2" height="2" fill="#e4e4e4" stroke="#c2c2c2" stroke-width="0.4"/><path d="M105.2 65.3 h4.4 L107.4 68.2 z" fill="#bcbcbc"/>
<rect x="115.2" y="60.6" width="10.6" height="11.2" fill="#ebe9df" stroke="#c8c8c8" stroke-width="0.7"/><g stroke="#dad8cc" stroke-width="0.5"><line x1="115.4" y1="63.2" x2="125.6" y2="63.2"/><line x1="115.4" y1="65.8" x2="125.6" y2="65.8"/><line x1="115.4" y1="68.4" x2="125.6" y2="68.4"/><line x1="118.6" y1="60.8" x2="118.6" y2="71.6"/><line x1="122" y1="60.8" x2="122" y2="71.6"/></g><line x1="127" y1="60.6" x2="121.4" y2="70.6" stroke="#c0c0c0" stroke-width="2"/><line x1="127" y1="60.6" x2="121.4" y2="70.6" stroke="#e9e9e9" stroke-width="0.8"/>
<path d="M136.4 63 h8.4 M138.6 63 v-1.4 h4 v1.4" fill="none" stroke="#c2c2c2" stroke-width="0.9"/><path d="M137 63.6 h7.2 l-0.5 8.6 h-6.2 z" fill="#eeeeee" stroke="#c2c2c2" stroke-width="0.8"/><g stroke="#c6c6c6" stroke-width="0.7"><line x1="139.2" y1="65" x2="139.2" y2="71"/><line x1="140.6" y1="65" x2="140.6" y2="71"/><line x1="142" y1="65" x2="142" y2="71"/></g>
<g fill="none" stroke="#c0c0c0" stroke-width="1"><path d="M153.8 62.6 L164 68.6"/><path d="M153.8 69.6 L164.4 63.8"/><circle cx="164.8" cy="63.6" r="1.6"/><circle cx="164.6" cy="69.4" r="1.6"/></g>
<path d="M177.4 60.4 h4.2 l3 3 v7 h-7.2 z" fill="#ececec" stroke="#cfcfcf" stroke-width="0.8"/><path d="M174.4 62.6 h4.4 l3 3 v7 h-7.4 z" fill="#ececec" stroke="#cfcfcf" stroke-width="0.8"/><g stroke="#c8c8c8" stroke-width="0.5"><line x1="176" y1="67" x2="180" y2="67"/><line x1="176" y1="69" x2="180" y2="69"/></g>
<rect x="194.2" y="61" width="9.4" height="11.2" rx="1" fill="#e3e3e3" stroke="#c2c2c2" stroke-width="0.8"/><rect x="196.6" y="60.2" width="4.6" height="2" fill="#dcdcdc" stroke="#cccccc" stroke-width="0.4"/><rect x="196" y="63.8" width="6" height="7.2" fill="#f3f3f3" stroke="#c8c8c8" stroke-width="0.5"/><g stroke="#c8c8c8" stroke-width="0.5"><line x1="197" y1="66" x2="201" y2="66"/><line x1="197" y1="68" x2="201" y2="68"/></g>
<path d="M213 65.4 L217.6 61.4 V64 C222 64 224.2 66 224 69 C223.8 71 222 71.6 220.4 71.4 C221.6 70.4 221.6 67.6 217.6 67.4 V69.6 Z" fill="#c8c8c8" stroke="#bcbcbc" stroke-width="0.4"/>
<path d="M243.2 65.4 L238.6 61.4 V64 C234.2 64 232 66 232.2 69 C232.4 71 234.2 71.6 235.8 71.4 C234.6 70.4 234.6 67.6 238.6 67.4 V69.6 Z" fill="#c8c8c8" stroke="#bcbcbc" stroke-width="0.4"/>
<rect x="251.8" y="61.2" width="0.9" height="0.9" fill="#d2d2d2"/><rect x="253.4" y="61.2" width="0.9" height="0.9" fill="#d2d2d2"/><rect x="252.3" y="61.8" width="0.8" height="0.7" fill="#fbfbfb"/><rect x="253.9" y="61.8" width="0.8" height="0.7" fill="#fbfbfb"/><rect x="251.8" y="63.5" width="0.9" height="0.9" fill="#d2d2d2"/><rect x="253.4" y="63.5" width="0.9" height="0.9" fill="#d2d2d2"/><rect x="252.3" y="64.1" width="0.8" height="0.7" fill="#fbfbfb"/><rect x="253.9" y="64.1" width="0.8" height="0.7" fill="#fbfbfb"/><rect x="251.8" y="65.8" width="0.9" height="0.9" fill="#d2d2d2"/><rect x="253.4" y="65.8" width="0.9" height="0.9" fill="#d2d2d2"/><rect x="252.3" y="66.4" width="0.8" height="0.7" fill="#fbfbfb"/><rect x="253.9" y="66.4" width="0.8" height="0.7" fill="#fbfbfb"/><rect x="251.8" y="68.1" width="0.9" height="0.9" fill="#d2d2d2"/><rect x="253.4" y="68.1" width="0.9" height="0.9" fill="#d2d2d2"/><rect x="252.3" y="68.7" width="0.8" height="0.7" fill="#fbfbfb"/><rect x="253.9" y="68.7" width="0.8" height="0.7" fill="#fbfbfb"/><rect x="251.8" y="70.4" width="0.9" height="0.9" fill="#d2d2d2"/><rect x="253.4" y="70.4" width="0.9" height="0.9" fill="#d2d2d2"/><rect x="252.3" y="71.0" width="0.8" height="0.7" fill="#fbfbfb"/><rect x="253.9" y="71.0" width="0.8" height="0.7" fill="#fbfbfb"/>
<path d="M259.4 65.1 L262.2 61.8 H271.59999999999997 V68.39999999999999 H262.2 Z" fill="#f3d423" stroke="#c9a50d" stroke-width="0.6" stroke-linejoin="round"/><text x="266.7" y="66.6" font-size="4.6" font-weight="bold" text-anchor="middle" fill="#4a4210" font-family="DejaVu Sans, Liberation Sans, sans-serif">abc</text>
<circle cx="284.4" cy="64.6" r="4.4" fill="#3f9a3a"/><path d="M284.4 64.6 L282.2 60.8 A4.4 4.4 0 0 1 287.6 61.6 Z" fill="#f0d020"/><path d="M284.4 64.6 L287.6 61.6 A4.4 4.4 0 0 1 287.4 67.9 Z" fill="#d9262c"/><rect x="286.3" y="65.2" width="2.4" height="7.4" fill="#3f9a3a" stroke="#2a7028" stroke-width="0.3"/><rect x="284.6" y="69.2" width="2" height="3.4" fill="#f0d020" stroke="#b99a10" stroke-width="0.3"/><rect x="289.3" y="69.4" width="2.5" height="3.2" fill="#d9262c" stroke="#a8181c" stroke-width="0.3"/>
<rect x="298.2" y="60.2" width="14.6" height="12" rx="1.2" fill="#cfe0f4" stroke="#4d93e4" stroke-width="0.9"/><rect x="299.4" y="67.6" width="7" height="3.6" fill="#e8f0fa"/><path d="M299.2 65.0 L302.0 62 H309.8 V68 H302.0 Z" fill="#f3d423" stroke="#c9a50d" stroke-width="0.6" stroke-linejoin="round"/><text x="305.7" y="66.5" font-size="4.6" font-weight="bold" text-anchor="middle" fill="#4a4210" font-family="DejaVu Sans, Liberation Sans, sans-serif">abc</text><circle cx="309.8" cy="69.6" r="2.3" fill="#c4191f" stroke="#8e1014" stroke-width="0.4"/><line x1="308.6" y1="63.4" x2="309.4" y2="67.4" stroke="#7a7a7a" stroke-width="0.8"/><circle cx="309" cy="68.6" r="0.8" fill="#f08a8a"/>
<path d="M317.8 64.89999999999999 L320.6 61.8 H329.2 V68.0 H320.6 Z" fill="#f3d423" stroke="#c9a50d" stroke-width="0.6" stroke-linejoin="round"/><text x="324.7" y="66.39999999999999" font-size="4.6" font-weight="bold" text-anchor="middle" fill="#4a4210" font-family="DejaVu Sans, Liberation Sans, sans-serif">abc</text><circle cx="328.6" cy="70" r="2.4" fill="#c4191f" stroke="#8e1014" stroke-width="0.4"/><line x1="327.4" y1="63.6" x2="328.2" y2="67.6" stroke="#6a6a6a" stroke-width="0.8"/><circle cx="327.8" cy="69" r="0.8" fill="#f08a8a"/>
<path d="M337.2 64.7 L340.0 61.6 H349.2 V67.8 H340.0 Z" fill="#f3d423" stroke="#c9a50d" stroke-width="0.6" stroke-linejoin="round"/><text x="344.4" y="66.2" font-size="4.6" font-weight="bold" text-anchor="middle" fill="#4a4210" font-family="DejaVu Sans, Liberation Sans, sans-serif">abc</text><path d="M341.6 70.6 Q346.4 66.4 351.2 70.6 Q346.4 74.6 341.6 70.6 Z" fill="#fff" stroke="#444" stroke-width="0.6"/><circle cx="346.4" cy="70.6" r="1.8" fill="#3f74b8"/><circle cx="346.4" cy="70.6" r="0.8" fill="#14243c"/>
<path d="M356.6 64.7 L359.40000000000003 61.6 H368.6 V67.8 H359.40000000000003 Z" fill="#f3d423" stroke="#c9a50d" stroke-width="0.6" stroke-linejoin="round"/><text x="363.8" y="66.2" font-size="4.6" font-weight="bold" text-anchor="middle" fill="#4a4210" font-family="DejaVu Sans, Liberation Sans, sans-serif">abc</text><rect x="364.4" y="66.4" width="6.6" height="6.6" rx="0.8" fill="#2d4d85" stroke="#1c3460" stroke-width="0.5"/><path d="M365.6 68.8 h2.4 v-1.3 l2.4 2.2 l-2.4 2.2 v-1.3 h-2.4 z" fill="#fff"/>
<path d="M376.2 64.7 L379.0 61.6 H388.2 V67.8 H379.0 Z" fill="#f3d423" stroke="#c9a50d" stroke-width="0.6" stroke-linejoin="round"/><text x="383.4" y="66.2" font-size="4.6" font-weight="bold" text-anchor="middle" fill="#4a4210" font-family="DejaVu Sans, Liberation Sans, sans-serif">abc</text><rect x="383.8" y="66.4" width="6.6" height="6.6" rx="0.8" fill="#2d4d85" stroke="#1c3460" stroke-width="0.5"/><path d="M385.4 70.4 a1.9 1.9 0 1 0 1.2 -2.2" fill="none" stroke="#fff" stroke-width="0.9"/><path d="M387.6 67 l-1.7 1.1 l1.6 1.2 z" fill="#fff"/>
<path d="M395.2 64.7 L398.0 61.6 H407.2 V67.8 H398.0 Z" fill="#f3d423" stroke="#c9a50d" stroke-width="0.6" stroke-linejoin="round"/><text x="402.4" y="66.2" font-size="4.6" font-weight="bold" text-anchor="middle" fill="#4a4210" font-family="DejaVu Sans, Liberation Sans, sans-serif">abc</text><rect x="403" y="66.4" width="6.8" height="6.6" rx="0.8" fill="#e3bf1c" stroke="#b99a10" stroke-width="0.5"/><line x1="408.4" y1="67.8" x2="405" y2="71.4" stroke="#fff" stroke-width="1.5"/><path d="M404.2 72.2 l0.4 -1.4 l1 1 z" fill="#fff"/>
<rect x="416.6" y="61.2" width="0.9" height="0.9" fill="#d2d2d2"/><rect x="418.2" y="61.2" width="0.9" height="0.9" fill="#d2d2d2"/><rect x="417.1" y="61.8" width="0.8" height="0.7" fill="#fbfbfb"/><rect x="418.7" y="61.8" width="0.8" height="0.7" fill="#fbfbfb"/><rect x="416.6" y="63.5" width="0.9" height="0.9" fill="#d2d2d2"/><rect x="418.2" y="63.5" width="0.9" height="0.9" fill="#d2d2d2"/><rect x="417.1" y="64.1" width="0.8" height="0.7" fill="#fbfbfb"/><rect x="418.7" y="64.1" width="0.8" height="0.7" fill="#fbfbfb"/><rect x="416.6" y="65.8" width="0.9" height="0.9" fill="#d2d2d2"/><rect x="418.2" y="65.8" width="0.9" height="0.9" fill="#d2d2d2"/><rect x="417.1" y="66.4" width="0.8" height="0.7" fill="#fbfbfb"/><rect x="418.7" y="66.4" width="0.8" height="0.7" fill="#fbfbfb"/><rect x="416.6" y="68.1" width="0.9" height="0.9" fill="#d2d2d2"/><rect x="418.2" y="68.1" width="0.9" height="0.9" fill="#d2d2d2"/><rect x="417.1" y="68.7" width="0.8" height="0.7" fill="#fbfbfb"/><rect x="418.7" y="68.7" width="0.8" height="0.7" fill="#fbfbfb"/><rect x="416.6" y="70.4" width="0.9" height="0.9" fill="#d2d2d2"/><rect x="418.2" y="70.4" width="0.9" height="0.9" fill="#d2d2d2"/><rect x="417.1" y="71.0" width="0.8" height="0.7" fill="#fbfbfb"/><rect x="418.7" y="71.0" width="0.8" height="0.7" fill="#fbfbfb"/>
<defs><linearGradient id="g1" x1="0" y1="0" x2="0" y2="1"><stop offset="0" stop-color="#a4cef6"/><stop offset="0.45" stop-color="#4d95e0"/><stop offset="1" stop-color="#3278c8"/></linearGradient></defs><circle cx="431.2" cy="65.7" r="6.9" fill="url(#g1)" stroke="#4a8fd8" stroke-width="0.4"/><ellipse cx="431.2" cy="65.7" rx="2.484" ry="6.6930000000000005" fill="#5aa6ee" stroke="#f6fafe" stroke-width="1.2"/><line x1="431.2" y1="59.300000000000004" x2="431.2" y2="72.10000000000001" stroke="#cfe3f8" stroke-width="0.6"/><rect x="426.1" y="61.2" width="1.8" height="1.9" rx="0.4" fill="#565b62"/><rect x="434.5" y="61.2" width="1.8" height="1.9" rx="0.4" fill="#565b62"/><line x1="429.2" y1="62.1" x2="433.2" y2="62.1" stroke="#d8e8f8" stroke-width="0.6"/><rect x="426.1" y="64.7" width="1.8" height="1.9" rx="0.4" fill="#565b62"/><rect x="434.5" y="64.7" width="1.8" height="1.9" rx="0.4" fill="#565b62"/><line x1="429.2" y1="65.6" x2="433.2" y2="65.6" stroke="#d8e8f8" stroke-width="0.6"/><rect x="426.1" y="68.1" width="1.8" height="1.9" rx="0.4" fill="#565b62"/><rect x="434.5" y="68.1" width="1.8" height="1.9" rx="0.4" fill="#565b62"/><line x1="429.2" y1="69.0" x2="433.2" y2="69.0" stroke="#d8e8f8" stroke-width="0.6"/><path d="M436.2 67.8 l2.9 2.8 l-2.9 2.8 l-2.9 -2.8 z" fill="#fff" stroke="#2f8a34" stroke-width="0.9"/><rect x="437.6" y="71.8" width="1.6" height="1.4" fill="#151515"/><rect x="433.4" y="71.8" width="1.4" height="1.4" fill="#1f5a24"/>
<defs><linearGradient id="g2" x1="0" y1="0" x2="0" y2="1"><stop offset="0" stop-color="#a4cef6"/><stop offset="0.45" stop-color="#4d95e0"/><stop offset="1" stop-color="#3278c8"/></linearGradient></defs><circle cx="450.7" cy="65.7" r="6.9" fill="url(#g2)" stroke="#4a8fd8" stroke-width="0.4"/><ellipse cx="450.7" cy="65.7" rx="2.484" ry="6.6930000000000005" fill="#5aa6ee" stroke="#f6fafe" stroke-width="1.2"/><line x1="450.7" y1="59.300000000000004" x2="450.7" y2="72.10000000000001" stroke="#cfe3f8" stroke-width="0.6"/><rect x="445.6" y="61.2" width="1.8" height="1.9" rx="0.4" fill="#565b62"/><rect x="454.0" y="61.2" width="1.8" height="1.9" rx="0.4" fill="#565b62"/><line x1="448.7" y1="62.1" x2="452.7" y2="62.1" stroke="#d8e8f8" stroke-width="0.6"/><rect x="445.6" y="64.7" width="1.8" height="1.9" rx="0.4" fill="#565b62"/><rect x="454.0" y="64.7" width="1.8" height="1.9" rx="0.4" fill="#565b62"/><line x1="448.7" y1="65.6" x2="452.7" y2="65.6" stroke="#d8e8f8" stroke-width="0.6"/><rect x="445.6" y="68.1" width="1.8" height="1.9" rx="0.4" fill="#565b62"/><rect x="454.0" y="68.1" width="1.8" height="1.9" rx="0.4" fill="#565b62"/><line x1="448.7" y1="69.0" x2="452.7" y2="69.0" stroke="#d8e8f8" stroke-width="0.6"/><rect x="452.6" y="68.4" width="5.4" height="4.9" rx="0.5" fill="#cfe6cc" stroke="#3a8a3a" stroke-width="0.7"/><circle cx="455.2" cy="70.6" r="1.2" fill="#fff" stroke="#2a5a2a" stroke-width="0.5"/><rect x="456.2" y="72" width="1.6" height="1.2" fill="#d8c030"/>
<circle cx="470" cy="65" r="6.9" fill="#3c66a6" stroke="#28497e" stroke-width="0.5"/><circle cx="470" cy="65" r="6.2" fill="none" stroke="#4a7ab8" stroke-width="0.6"/><path d="M465 62.8 q2 -2.8 4.2 -1.6 q1.6 1.8 -0.6 3 q-1.8 1.8 -3.2 0.8 z M471.4 60 q3.2 0.2 4.2 3.4 q-1.8 1.6 -3.2 0 z M468.4 65.2 q2.6 -0.8 4 1.2 q-0.6 1.6 -2.8 1.6 z M464.4 66 q1.2 0.2 1.6 1.4 l-1 0.6 z M474 65.4 l1.8 0.4 l-0.6 1.4 z" fill="#b4cdec" opacity="0.9"/><path d="M467.2 67.4 h2.2 l0.9 1.4 h0.9 l0.9 -1.4 h2.2 l2.8 4.2 q0.2 1.6 -2.6 1.6 q-2.6 0 -2.8 -1.8 h-2 q-0.2 1.8 -2.8 1.8 q-2.8 0 -2.6 -1.6 z" fill="#0c0c0c"/><ellipse cx="467.6" cy="72" rx="1.7" ry="0.8" fill="#f6f6f6"/><ellipse cx="474.8" cy="72" rx="1.7" ry="0.8" fill="#f6f6f6"/>
<rect x="484.0" y="61.2" width="0.9" height="0.9" fill="#d2d2d2"/><rect x="485.6" y="61.2" width="0.9" height="0.9" fill="#d2d2d2"/><rect x="484.5" y="61.8" width="0.8" height="0.7" fill="#fbfbfb"/><rect x="486.1" y="61.8" width="0.8" height="0.7" fill="#fbfbfb"/><rect x="484.0" y="63.5" width="0.9" height="0.9" fill="#d2d2d2"/><rect x="485.6" y="63.5" width="0.9" height="0.9" fill="#d2d2d2"/><rect x="484.5" y="64.1" width="0.8" height="0.7" fill="#fbfbfb"/><rect x="486.1" y="64.1" width="0.8" height="0.7" fill="#fbfbfb"/><rect x="484.0" y="65.8" width="0.9" height="0.9" fill="#d2d2d2"/><rect x="485.6" y="65.8" width="0.9" height="0.9" fill="#d2d2d2"/><rect x="484.5" y="66.4" width="0.8" height="0.7" fill="#fbfbfb"/><rect x="486.1" y="66.4" width="0.8" height="0.7" fill="#fbfbfb"/><rect x="484.0" y="68.1" width="0.9" height="0.9" fill="#d2d2d2"/><rect x="485.6" y="68.1" width="0.9" height="0.9" fill="#d2d2d2"/><rect x="484.5" y="68.7" width="0.8" height="0.7" fill="#fbfbfb"/><rect x="486.1" y="68.7" width="0.8" height="0.7" fill="#fbfbfb"/><rect x="484.0" y="70.4" width="0.9" height="0.9" fill="#d2d2d2"/><rect x="485.6" y="70.4" width="0.9" height="0.9" fill="#d2d2d2"/><rect x="484.5" y="71.0" width="0.8" height="0.7" fill="#fbfbfb"/><rect x="486.1" y="71.0" width="0.8" height="0.7" fill="#fbfbfb"/>
<path d="M496.4 60.2 h3.4 q2 0 2 2 v2.6 q0 1.6 -1.6 1.6 h-3.6 q-1.8 0 -1.8 1.8 v1 h-0.6 q-1.6 0 -1.6 -2.2 v-1.4 q0 -2 2.2 -2 h3.6 v-0.6 h-3.6 v-1.2 q0 -1.6 1.6 -1.6 z" fill="#3f78b8"/><circle cx="496.6" cy="61.8" r="0.6" fill="#fff"/><path d="M501.8 72.4 h-3.4 q-2 0 -2 -2 v-2.6 q0 -1.6 1.6 -1.6 h3.6 q1.8 0 1.8 -1.8 v-1 h0.6 q1.6 0 1.6 2.2 v1.4 q0 2 -2.2 2 h-3.6 v0.6 h3.6 v1.2 q0 1.6 -1.6 1.6 z" fill="#f1d23c"/><circle cx="501.6" cy="70.8" r="0.6" fill="#fff"/><path d="M501.4 68.6 l4 2.6 l-1.8 0.3 l1 1.6 l-0.8 0.5 l-1 -1.7 l-1.2 1.2 z" fill="#ddd" stroke="#444" stroke-width="0.4"/>
<line x1="513.2" y1="71.8" x2="519.2" y2="63.8" stroke="#a07c10" stroke-width="2.7" stroke-linecap="round"/><line x1="513.2" y1="71.8" x2="519.2" y2="63.8" stroke="#f2c520" stroke-width="1.7" stroke-linecap="round"/><path d="M515.4 63.2 C516.8 60.8 519.6 60.2 521.4 61.2 L524.9 63.8 L524 65 L521 63.2 L519.9 64.4 L518.4 63.3 C517.4 62.6 516.4 62.8 515.4 63.2 Z" fill="#777" stroke="#333" stroke-width="0.5" stroke-linejoin="round"/><path d="M516.6 62 C517.8 60.9 519.4 60.7 520.8 61.3" fill="none" stroke="#d8d8d8" stroke-width="0.5"/>
<circle cx="538" cy="66.1" r="6.9" fill="#0e1626" stroke="#2b3b86" stroke-width="0.9"/><circle cx="538" cy="66.1" r="5.6" fill="#0a0f1a"/><path d="M535.2 63.2 q2.4 -1.2 4.4 1 q1.6 2.4 1 5.2 q-2 0.6 -3 -1.4 q-2.4 -2.2 -2.4 -4.8 z" fill="#3f8fe0"/><path d="M537.4 65.6 q1.6 0.4 2.2 2.4 q-0.8 1 -1.8 0 z" fill="#4aa648"/>
<path d="M552.2 66.6 A4.8 4.8 0 1 1 557.6 71" fill="none" stroke="#4a8fe0" stroke-width="3.1"/><path d="M549.2 65 h6.4 l-3.2 4.4 z" fill="#4a8fe0"/><path d="M552.8 66.4 A4 4 0 0 1 560.6 65" fill="none" stroke="#9cc4f0" stroke-width="0.7"/><path d="M567.5 65.3 h4.4 L569.7 68.2 z" fill="#333"/>
<circle cx="583.5" cy="66.2" r="6.9" fill="#5c9a2c" stroke="#e6c11c" stroke-width="0.9"/><path d="M578.4 69.8 L583 64 L585.3 61 L589.2 67.8" fill="none" stroke="#0c0c0c" stroke-width="1"/>
<rect x="597.8" y="61.2" width="0.9" height="0.9" fill="#d2d2d2"/><rect x="599.4" y="61.2" width="0.9" height="0.9" fill="#d2d2d2"/><rect x="598.3" y="61.8" width="0.8" height="0.7" fill="#fbfbfb"/><rect x="599.9" y="61.8" width="0.8" height="0.7" fill="#fbfbfb"/><rect x="597.8" y="63.5" width="0.9" height="0.9" fill="#d2d2d2"/><rect x="599.4" y="63.5" width="0.9" height="0.9" fill="#d2d2d2"/><rect x="598.3" y="64.1" width="0.8" height="0.7" fill="#fbfbfb"/><rect x="599.9" y="64.1" width="0.8" height="0.7" fill="#fbfbfb"/><rect x="597.8" y="65.8" width="0.9" height="0.9" fill="#d2d2d2"/><rect x="599.4" y="65.8" width="0.9" height="0.9" fill="#d2d2d2"/><rect x="598.3" y="66.4" width="0.8" height="0.7" fill="#fbfbfb"/><rect x="599.9" y="66.4" width="0.8" height="0.7" fill="#fbfbfb"/><rect x="597.8" y="68.1" width="0.9" height="0.9" fill="#d2d2d2"/><rect x="599.4" y="68.1" width="0.9" height="0.9" fill="#d2d2d2"/><rect x="598.3" y="68.7" width="0.8" height="0.7" fill="#fbfbfb"/><rect x="599.9" y="68.7" width="0.8" height="0.7" fill="#fbfbfb"/><rect x="597.8" y="70.4" width="0.9" height="0.9" fill="#d2d2d2"/><rect x="599.4" y="70.4" width="0.9" height="0.9" fill="#d2d2d2"/><rect x="598.3" y="71.0" width="0.8" height="0.7" fill="#fbfbfb"/><rect x="599.9" y="71.0" width="0.8" height="0.7" fill="#fbfbfb"/>
<rect x="606.2" y="60.2" width="12.2" height="12.2" rx="0.8" fill="#4a82c6" stroke="#2d5a9a" stroke-width="0.5"/><rect x="606.2" y="60.2" width="3.2" height="12.2" fill="#17273f"/><g fill="#3f6aa8"><rect x="607" y="61.2" width="1.4" height="1"/><rect x="607" y="63.4" width="1.4" height="1"/><rect x="607" y="65.6" width="1.4" height="1"/><rect x="607" y="67.8" width="1.4" height="1"/><rect x="607" y="70.0" width="1.4" height="1"/></g><text x="614" y="69" font-size="6.8" font-weight="bold" text-anchor="middle" fill="#cfe0f6" font-family="DejaVu Sans, Liberation Sans, sans-serif">?</text>
<rect x="627.0" y="61.2" width="0.9" height="0.9" fill="#d2d2d2"/><rect x="628.6" y="61.2" width="0.9" height="0.9" fill="#d2d2d2"/><rect x="627.5" y="61.8" width="0.8" height="0.7" fill="#fbfbfb"/><rect x="629.1" y="61.8" width="0.8" height="0.7" fill="#fbfbfb"/><rect x="627.0" y="63.5" width="0.9" height="0.9" fill="#d2d2d2"/><rect x="628.6" y="63.5" width="0.9" height="0.9" fill="#d2d2d2"/><rect x="627.5" y="64.1" width="0.8" height="0.7" fill="#fbfbfb"/><rect x="629.1" y="64.1" width="0.8" height="0.7" fill="#fbfbfb"/><rect x="627.0" y="65.8" width="0.9" height="0.9" fill="#d2d2d2"/><rect x="628.6" y="65.8" width="0.9" height="0.9" fill="#d2d2d2"/><rect x="627.5" y="66.4" width="0.8" height="0.7" fill="#fbfbfb"/><rect x="629.1" y="66.4" width="0.8" height="0.7" fill="#fbfbfb"/><rect x="627.0" y="68.1" width="0.9" height="0.9" fill="#d2d2d2"/><rect x="628.6" y="68.1" width="0.9" height="0.9" fill="#d2d2d2"/><rect x="627.5" y="68.7" width="0.8" height="0.7" fill="#fbfbfb"/><rect x="629.1" y="68.7" width="0.8" height="0.7" fill="#fbfbfb"/><rect x="627.0" y="70.4" width="0.9" height="0.9" fill="#d2d2d2"/><rect x="628.6" y="70.4" width="0.9" height="0.9" fill="#d2d2d2"/><rect x="627.5" y="71.0" width="0.8" height="0.7" fill="#fbfbfb"/><rect x="629.1" y="71.0" width="0.8" height="0.7" fill="#fbfbfb"/>
<rect x="637.0" y="61.2" width="0.9" height="0.9" fill="#d2d2d2"/><rect x="638.6" y="61.2" width="0.9" height="0.9" fill="#d2d2d2"/><rect x="637.5" y="61.8" width="0.8" height="0.7" fill="#fbfbfb"/><rect x="639.1" y="61.8" width="0.8" height="0.7" fill="#fbfbfb"/><rect x="637.0" y="63.5" width="0.9" height="0.9" fill="#d2d2d2"/><rect x="638.6" y="63.5" width="0.9" height="0.9" fill="#d2d2d2"/><rect x="637.5" y="64.1" width="0.8" height="0.7" fill="#fbfbfb"/><rect x="639.1" y="64.1" width="0.8" height="0.7" fill="#fbfbfb"/><rect x="637.0" y="65.8" width="0.9" height="0.9" fill="#d2d2d2"/><rect x="638.6" y="65.8" width="0.9" height="0.9" fill="#d2d2d2"/><rect x="637.5" y="66.4" width="0.8" height="0.7" fill="#fbfbfb"/><rect x="639.1" y="66.4" width="0.8" height="0.7" fill="#fbfbfb"/><rect x="637.0" y="68.1" width="0.9" height="0.9" fill="#d2d2d2"/><rect x="638.6" y="68.1" width="0.9" height="0.9" fill="#d2d2d2"/><rect x="637.5" y="68.7" width="0.8" height="0.7" fill="#fbfbfb"/><rect x="639.1" y="68.7" width="0.8" height="0.7" fill="#fbfbfb"/><rect x="637.0" y="70.4" width="0.9" height="0.9" fill="#d2d2d2"/><rect x="638.6" y="70.4" width="0.9" height="0.9" fill="#d2d2d2"/><rect x="637.5" y="71.0" width="0.8" height="0.7" fill="#fbfbfb"/><rect x="639.1" y="71.0" width="0.8" height="0.7" fill="#fbfbfb"/>
<defs><radialGradient id="sun" cx="0.42" cy="0.42" r="0.6"><stop offset="0" stop-color="#fff27a"/><stop offset="0.45" stop-color="#ffd21a"/><stop offset="1" stop-color="#f79a12"/></radialGradient></defs><path d="M658.00 66.40 L656.89 67.51 L657.49 68.96 L656.04 69.57 L656.04 71.14 L654.47 71.14 L653.86 72.59 L652.41 71.99 L651.30 73.10 L650.19 71.99 L648.74 72.59 L648.13 71.14 L646.56 71.14 L646.56 69.57 L645.11 68.96 L645.71 67.51 L644.60 66.40 L645.71 65.29 L645.11 63.84 L646.56 63.23 L646.56 61.66 L648.13 61.66 L648.74 60.21 L650.19 60.81 L651.30 59.70 L652.41 60.81 L653.86 60.21 L654.47 61.66 L656.04 61.66 L656.04 63.23 L657.49 63.84 L656.89 65.29 Z" fill="#ee7f12"/><circle cx="651.3" cy="66.4" r="5.6" fill="url(#sun)"/>
<rect x="665.4" y="61.2" width="0.9" height="0.9" fill="#d2d2d2"/><rect x="667.0" y="61.2" width="0.9" height="0.9" fill="#d2d2d2"/><rect x="665.9" y="61.8" width="0.8" height="0.7" fill="#fbfbfb"/><rect x="667.5" y="61.8" width="0.8" height="0.7" fill="#fbfbfb"/><rect x="665.4" y="63.5" width="0.9" height="0.9" fill="#d2d2d2"/><rect x="667.0" y="63.5" width="0.9" height="0.9" fill="#d2d2d2"/><rect x="665.9" y="64.1" width="0.8" height="0.7" fill="#fbfbfb"/><rect x="667.5" y="64.1" width="0.8" height="0.7" fill="#fbfbfb"/><rect x="665.4" y="65.8" width="0.9" height="0.9" fill="#d2d2d2"/><rect x="667.0" y="65.8" width="0.9" height="0.9" fill="#d2d2d2"/><rect x="665.9" y="66.4" width="0.8" height="0.7" fill="#fbfbfb"/><rect x="667.5" y="66.4" width="0.8" height="0.7" fill="#fbfbfb"/><rect x="665.4" y="68.1" width="0.9" height="0.9" fill="#d2d2d2"/><rect x="667.0" y="68.1" width="0.9" height="0.9" fill="#d2d2d2"/><rect x="665.9" y="68.7" width="0.8" height="0.7" fill="#fbfbfb"/><rect x="667.5" y="68.7" width="0.8" height="0.7" fill="#fbfbfb"/><rect x="665.4" y="70.4" width="0.9" height="0.9" fill="#d2d2d2"/><rect x="667.0" y="70.4" width="0.9" height="0.9" fill="#d2d2d2"/><rect x="665.9" y="71.0" width="0.8" height="0.7" fill="#fbfbfb"/><rect x="667.5" y="71.0" width="0.8" height="0.7" fill="#fbfbfb"/>
<rect x="675.4" y="61.2" width="0.9" height="0.9" fill="#d2d2d2"/><rect x="677.0" y="61.2" width="0.9" height="0.9" fill="#d2d2d2"/><rect x="675.9" y="61.8" width="0.8" height="0.7" fill="#fbfbfb"/><rect x="677.5" y="61.8" width="0.8" height="0.7" fill="#fbfbfb"/><rect x="675.4" y="63.5" width="0.9" height="0.9" fill="#d2d2d2"/><rect x="677.0" y="63.5" width="0.9" height="0.9" fill="#d2d2d2"/><rect x="675.9" y="64.1" width="0.8" height="0.7" fill="#fbfbfb"/><rect x="677.5" y="64.1" width="0.8" height="0.7" fill="#fbfbfb"/><rect x="675.4" y="65.8" width="0.9" height="0.9" fill="#d2d2d2"/><rect x="677.0" y="65.8" width="0.9" height="0.9" fill="#d2d2d2"/><rect x="675.9" y="66.4" width="0.8" height="0.7" fill="#fbfbfb"/><rect x="677.5" y="66.4" width="0.8" height="0.7" fill="#fbfbfb"/><rect x="675.4" y="68.1" width="0.9" height="0.9" fill="#d2d2d2"/><rect x="677.0" y="68.1" width="0.9" height="0.9" fill="#d2d2d2"/><rect x="675.9" y="68.7" width="0.8" height="0.7" fill="#fbfbfb"/><rect x="677.5" y="68.7" width="0.8" height="0.7" fill="#fbfbfb"/><rect x="675.4" y="70.4" width="0.9" height="0.9" fill="#d2d2d2"/><rect x="677.0" y="70.4" width="0.9" height="0.9" fill="#d2d2d2"/><rect x="675.9" y="71.0" width="0.8" height="0.7" fill="#fbfbfb"/><rect x="677.5" y="71.0" width="0.8" height="0.7" fill="#fbfbfb"/>
<rect x="6.8" y="80.6" width="0.9" height="0.9" fill="#d2d2d2"/><rect x="6.8" y="82.2" width="0.9" height="0.9" fill="#d2d2d2"/><rect x="9.1" y="80.6" width="0.9" height="0.9" fill="#d2d2d2"/><rect x="9.1" y="82.2" width="0.9" height="0.9" fill="#d2d2d2"/><rect x="11.4" y="80.6" width="0.9" height="0.9" fill="#d2d2d2"/><rect x="11.4" y="82.2" width="0.9" height="0.9" fill="#d2d2d2"/><rect x="13.7" y="80.6" width="0.9" height="0.9" fill="#d2d2d2"/><rect x="13.7" y="82.2" width="0.9" height="0.9" fill="#d2d2d2"/><rect x="16.0" y="80.6" width="0.9" height="0.9" fill="#d2d2d2"/><rect x="16.0" y="82.2" width="0.9" height="0.9" fill="#d2d2d2"/>
<rect x="6" y="91.6" width="8" height="8" transform="rotate(-18 10 95.6)" fill="#d9522a" stroke="#a8381a" stroke-width="0.4"/><rect x="7.6" y="90.2" width="8" height="8" transform="rotate(-8 11.6 94.2)" fill="#efc834" stroke="#b99a10" stroke-width="0.4"/><rect x="10" y="88.4" width="8.6" height="8.6" transform="rotate(10 14.3 92.7)" fill="#4a82c6" stroke="#2d5a9a" stroke-width="0.4"/><circle cx="16.2" cy="98.8" r="2.7" fill="#f6f6f6" stroke="#3a8a3a" stroke-width="0.7"/><path d="M16.2 97 v3.6 M14.4 98.8 h3.6" stroke="#2f8a2f" stroke-width="1.1"/>
<path d="M5.4 111 l6 -3.2 l7.6 2.2 v6.6 l-6.4 3.4 l-7.2 -2.6 z" fill="#e6c325" stroke="#a88a10" stroke-width="0.5" stroke-linejoin="round"/><path d="M5.4 111 l7.2 2.4 l6.4 -3.4 M12.6 113.4 v6.6" fill="none" stroke="#a88a10" stroke-width="0.5"/><path d="M5.4 111 l7.2 2.4 v6.6 l-7.2 -2.6 z" fill="#f3da4a"/><ellipse cx="12.4" cy="109.6" rx="4.6" ry="3.2" fill="#3f78c0" stroke="#1e4478" stroke-width="0.5"/><path d="M9.4 108.6 q1.6 -1.8 3.4 -0.6 q-0.2 1.6 -2 1.6 z M13.6 108 q1.8 0.2 2.4 1.6 q-1.2 1 -2.2 0 z" fill="#dbe8f8"/><g opacity="1"><rect x="13.2" y="113.8" width="6.2" height="6.2" rx="0.9" fill="#e2bd18" stroke="#c8a414" stroke-width="0.5"/><polygon points="18.56,117.84 17.18,117.78 17.24,119.16 16.30,118.15 15.36,119.16 15.42,117.78 14.04,117.84 15.05,116.90 14.04,115.96 15.42,116.02 15.36,114.64 16.30,115.65 17.24,114.64 17.18,116.02 18.56,115.96 17.55,116.90" fill="#fffbe6"/><circle cx="16.3" cy="116.89999999999999" r="0.6" fill="#ecd460"/></g>
<path d="M6.6 125.6 L10.4 137.6 L17 126.2" fill="none" stroke="#3a3a3a" stroke-width="0.9"/><g fill="#f4f4f4" stroke="#4a4a4a" stroke-width="0.6"><circle cx="6.6" cy="125.6" r="1"/><circle cx="17.4" cy="125.8" r="1.1"/><circle cx="10.4" cy="137.6" r="1"/></g><g opacity="1"><rect x="13.2" y="133" width="6.2" height="6.2" rx="0.9" fill="#e2bd18" stroke="#c8a414" stroke-width="0.5"/><polygon points="18.56,137.04 17.18,136.98 17.24,138.36 16.30,137.35 15.36,138.36 15.42,136.98 14.04,137.04 15.05,136.10 14.04,135.16 15.42,135.22 15.36,133.84 16.30,134.85 17.24,133.84 17.18,135.22 18.56,135.16 17.55,136.10" fill="#fffbe6"/><circle cx="16.3" cy="136.1" r="0.6" fill="#ecd460"/></g>
<path d="M5 157.4 C6 151 10 145.6 17.8 144.2 C18 149.4 13.6 153.6 7.4 154.2 Z" fill="#4a86cc" stroke="#2d5a9a" stroke-width="0.5"/><path d="M5 157.4 C7.4 151.6 11 147.6 16.6 145" fill="none" stroke="#bcd6f2" stroke-width="0.6"/><g opacity="1"><rect x="13.2" y="152.2" width="6.2" height="6.2" rx="0.9" fill="#e2bd18" stroke="#c8a414" stroke-width="0.5"/><polygon points="18.56,156.24 17.18,156.18 17.24,157.56 16.30,156.55 15.36,157.56 15.42,156.18 14.04,156.24 15.05,155.30 14.04,154.36 15.42,154.42 15.36,153.04 16.30,154.05 17.24,153.04 17.18,154.42 18.56,154.36 17.55,155.30" fill="#fffbe6"/><circle cx="16.3" cy="155.29999999999998" r="0.6" fill="#ecd460"/></g>
<rect x="6.2" y="166.2" width="11.6" height="7.2" rx="0.8" fill="#4a86cc" stroke="#2d5a9a" stroke-width="0.5"/><g stroke="#2d5a9a" stroke-width="0.8"><line x1="8.4" y1="164.2" x2="8.4" y2="166.2"/><line x1="10.8" y1="164.2" x2="10.8" y2="166.2"/><line x1="13.2" y1="164.2" x2="13.2" y2="166.2"/><line x1="15.6" y1="164.2" x2="15.6" y2="166.2"/><line x1="8.4" y1="173.4" x2="8.4" y2="175.4"/><line x1="10.8" y1="173.4" x2="10.8" y2="175.4"/></g><g opacity="1"><rect x="13.2" y="171" width="6.2" height="6.2" rx="0.9" fill="#e2bd18" stroke="#c8a414" stroke-width="0.5"/><polygon points="18.56,175.04 17.18,174.98 17.24,176.36 16.30,175.35 15.36,176.36 15.42,174.98 14.04,175.04 15.05,174.10 14.04,173.16 15.42,173.22 15.36,171.84 16.30,172.85 17.24,171.84 17.18,173.22 18.56,173.16 17.55,174.10" fill="#fffbe6"/><circle cx="16.3" cy="174.1" r="0.6" fill="#ecd460"/></g>
<line x1="5.4" y1="181.7" x2="18" y2="181.7" stroke="#d4d4d4" stroke-width="0.7"/>
<rect x="4.8" y="186" width="13.4" height="13.6" rx="1.8" fill="#cbdcf0" stroke="#6f94c4" stroke-width="0.8"/><path d="M6.6 187.6 L10.6 198.4 L16.4 187.6 Z" fill="#f4f8fc" stroke="#8a9ab0" stroke-width="0.5"/><path d="M10.6 198 L11.2 188" stroke="#9ab0cc" stroke-width="0.5"/><circle cx="6.8" cy="187.8" r="0.8" fill="#fff" stroke="#555" stroke-width="0.4"/><g opacity="1"><rect x="13.2" y="193.9" width="6.2" height="6.2" rx="0.9" fill="#e2bd18" stroke="#c8a414" stroke-width="0.5"/><polygon points="18.56,197.94 17.18,197.88 17.24,199.26 16.30,198.25 15.36,199.26 15.42,197.88 14.04,197.94 15.05,197.00 14.04,196.06 15.42,196.12 15.36,194.74 16.30,195.75 17.24,194.74 17.18,196.12 18.56,196.06 17.55,197.00" fill="#fffbe6"/><circle cx="16.3" cy="197.0" r="0.6" fill="#ecd460"/></g>
<path d="M28.8 98.2 l4.4 -2 l2 3.4 l-4 1.9 z" fill="#e2522a"/><path d="M29.6 96.8 l3.4 -1.4 l0.8 1.4 l-3.6 1.6 z" fill="#f0d020"/><path d="M30.4 100 l3.8 -1.6 l0.6 1 l-3.6 1.8 z" fill="#4a82c6"/><line x1="33" y1="98.6" x2="37.4" y2="94.6" stroke="#d8a418" stroke-width="1.3" stroke-linecap="round"/>
<path d="M43.2 102.2 v-3.4 l3 -4.6 h2.4 l1.6 4.6 v3.4 z" fill="#cfcfcf" stroke="#6a6a6a" stroke-width="0.6"/><path d="M46.4 94.6 l0.5 4.2 M48.4 94.4 l-0.3 4" stroke="#5a5a5a" stroke-width="0.6"/><path d="M43.4 98.8 h6.6" stroke="#8a8a8a" stroke-width="0.5"/><rect x="48" y="98.6" width="4.2" height="4" fill="#eaf4ee" stroke="#3f7f6a" stroke-width="0.7"/>
<path d="M58.2 98.2 Q62.6 93.4 67.4 98.2 Q62.6 102.6 58.2 98.2 Z" fill="#d5dbe2" stroke="#707070" stroke-width="0.7"/><circle cx="62.8" cy="98.2" r="2.1" fill="#4a82c6"/><circle cx="62.8" cy="98.2" r="0.9" fill="#1c2c44"/><path d="M66.0 101.0 h2.4 L67.2 102.7 z" fill="#444"/>
<path d="M73.2 94.4 h8.4 v1.4 l-3.1 3.4 v3.4 l-2.2 -1 v-2.4 l-3.1 -3.4 z" fill="#4a8ad4" stroke="#3a6fb0" stroke-width="0.4"/><rect x="73.2" y="93.4" width="8.4" height="1.7" fill="#efc834" stroke="#c9a414" stroke-width="0.3"/>
<path d="M92.4 95.2 C91.6 93.6 88.6 93.7 88.8 95.6 C88.9 96.8 90.2 97 91 96.9 C89.7 97 88.3 97.5 88.4 98.9 C88.6 100.8 91.8 100.6 92.8 99" fill="none" stroke="#3f2150" stroke-width="0.75" stroke-linecap="round"/><circle cx="89.2" cy="96.6" r="0.5" fill="#c04a9a"/><path d="M92.6 99.4 h4 v1 l-1.3 1.2 v1.2 l-1.4 -0.4 v-0.8 l-1.3 -1.2 z" fill="#f4f4f4" stroke="#6a6a6a" stroke-width="0.55"/><path d="M100.6 96.8 h3.8 L102.5 99.3 z" fill="#333"/>
<rect x="109.2" y="94.2" width="4.4" height="7.4" fill="#f4f4f4" stroke="#b4b4b4" stroke-width="0.5"/><rect x="110" y="95.4" width="1" height="1" fill="#e8b818"/><rect x="110" y="97.6" width="1" height="1" fill="#e8b818"/><rect x="110" y="99.6" width="1" height="1" fill="#e0522a"/><path d="M113.8 94 h2.2 v4.4 h1.6 l-2.7 3.4 l-2.7 -3.4 h1.6 z" fill="#3f74b8" stroke="#2a5796" stroke-width="0.3"/>
<rect x="124.4" y="94.2" width="4.4" height="7.4" fill="#f4f4f4" stroke="#b4b4b4" stroke-width="0.5"/><rect x="125.2" y="95.4" width="1" height="1" fill="#e8b818"/><rect x="125.2" y="97.6" width="1" height="1" fill="#e8b818"/><rect x="125.2" y="99.6" width="1" height="1" fill="#e0522a"/><path d="M129 101.8 h2.2 v-4.4 h1.6 l-2.7 -3.4 l-2.7 3.4 h1.6 z" fill="#3f74b8" stroke="#2a5796" stroke-width="0.3"/>
<rect x="138.6" y="94.2" width="6.6" height="6.6" fill="#fafafa" stroke="#7a7a7a" stroke-width="0.6"/><circle cx="145.4" cy="100.8" r="1.5" fill="#e23a3a" stroke="#c01c1c" stroke-width="0.3"/>
<rect x="200.5" y="80.3" width="6.6" height="6.6" rx="1.6" fill="#c9c9c9" stroke="#a4a4a4" stroke-width="0.6"/><path d="M202.2 85.2 l3.2 -3.2" stroke="#fafafa" stroke-width="1"/><path d="M202 82 h1.6 M205.6 85.4 v-1.4" stroke="#555" stroke-width="0.7"/><rect x="204.4" y="84.4" width="1.4" height="1.2" fill="#fff"/><rect x="202" y="84.6" width="1.2" height="1" fill="#666"/>
<rect x="209" y="80.3" width="6.6" height="6.6" rx="1.6" fill="#c9c9c9" stroke="#a4a4a4" stroke-width="0.6"/><path d="M210.6 81.9 l3.4 3.4 M214 81.9 l-3.4 3.4" stroke="#2a2a2a" stroke-width="0.9"/><rect x="211.5" y="84.6" width="1.6" height="1.1" fill="#f4f4f4"/>
<rect x="38" y="109.4" width="7.6" height="7.6" rx="0.8" fill="#fff" stroke="#b4b4b4" stroke-width="0.6"/><path d="M39.6 113.2 l1.6 2 l2.8 -4.4" fill="none" stroke="#1a1a1a" stroke-width="1.1"/>
<rect x="38" y="120.2" width="7.6" height="7.6" rx="0.8" fill="#fff" stroke="#b4b4b4" stroke-width="0.6"/><path d="M39.6 124.0 l1.6 2 l2.8 -4.4" fill="none" stroke="#1a1a1a" stroke-width="1.1"/>
<line x1="49.6" y1="113.7" x2="58.6" y2="113.7" stroke="#b8305a" stroke-width="1"/><line x1="49.6" y1="124.4" x2="58.6" y2="124.4" stroke="#111" stroke-width="1.1"/>
<line x1="62.4" y1="118" x2="81" y2="118" stroke="#d6e6f4" stroke-width="0.5" stroke-dasharray="0.7 0.7"/>
<path d="M141.3 115.9 V126.4 L143.7 124.2 L145.6 128 L147.2 127.2 L145.4 123.6 L148.4 123.2 Z" fill="#fff" stroke="#111" stroke-width="0.7" stroke-linejoin="round"/>
<rect x="9.2" y="8" width="3.4" height="4.4" rx="0.8" fill="#25303e"/><rect x="10" y="9.6" width="1.6" height="1.4" fill="#6f8fb8"/>
<rect x="750" y="11" width="3.2" height="1.3" fill="#2e3842"/><rect x="770.4" y="8.5" width="3.4" height="3.4" fill="none" stroke="#2e3842" stroke-width="1.1"/><path d="M791.2 8.3 l3.6 3.8 M794.8 8.3 l-3.6 3.8" stroke="#2e3842" stroke-width="1.2"/>
<circle cx="10.2" cy="426.8" r="2.5" fill="none" stroke="#8e8e8e" stroke-width="0.9"/><line x1="12" y1="428.7" x2="14.2" y2="430.9" stroke="#8e8e8e" stroke-width="1"/>
<g fill="none" stroke="#222" stroke-width="1"><ellipse cx="419.8" cy="428.2" rx="3" ry="3.4" transform="rotate(-25 419.8 428.2)"/><path d="M417 423.4 q2.4 -1 3.4 1.6 M415.4 430 L424 423"/><circle cx="420.6" cy="429.6" r="0.9"/></g>
<path d="M513.4 427 v-1.6 a1.9 2 0 0 1 3.8 0 v1.6" fill="none" stroke="#6a6a6a" stroke-width="1"/><rect x="511.8" y="426.6" width="7" height="5" rx="0.8" fill="#5c5c5c"/>
<path d="M496.1 426.1 h4.2 L498.2 428.9 z" fill="#3a3a3a"/>
<line x1="492.4" y1="422.4" x2="492.4" y2="432.6" stroke="#cdcdcd" stroke-width="0.6"/>
<line x1="598.6" y1="422.4" x2="598.6" y2="432.6" stroke="#cdcdcd" stroke-width="0.6"/><path d="M600.4 426.6 l1.9 -1.9 l1.9 1.9 z M600.4 429.2 l1.9 1.9 l1.9 -1.9 z" fill="#3a3a3a"/>
<line x1="685.8" y1="422.4" x2="685.8" y2="432.6" stroke="#cdcdcd" stroke-width="0.6"/><path d="M687.4 426.6 l1.9 -1.9 l1.9 1.9 z M687.4 429.2 l1.9 1.9 l1.9 -1.9 z" fill="#3a3a3a"/>
<rect x="697.4" y="424" width="7.4" height="7.4" rx="0.8" fill="#fff" stroke="#b4b4b4" stroke-width="0.6"/><path d="M699 427.8 l1.6 2 l2.8 -4.4" fill="none" stroke="#1a1a1a" stroke-width="1.1"/>
<path d="M737.8 427.8 q0.6 -3.2 4.4 -3.9 q3.8 0.7 4.4 3.9 q-0.6 3.2 -4.4 3.9 q-3.8 -0.7 -4.4 -3.9 z" fill="#7a7a7a"/><g stroke="#e8e8e8" stroke-width="0.4" fill="none"><ellipse cx="742.2" cy="427.8" rx="1.9" ry="3.7"/><line x1="742.2" y1="424" x2="742.2" y2="431.6"/><line x1="738.4" y1="426.2" x2="746" y2="426.2"/><line x1="738" y1="427.8" x2="746.4" y2="427.8"/><line x1="738.4" y1="429.4" x2="746" y2="429.4"/></g>
<path d="M790.3 427.6 q0 -3.6 4.8 -3.6 q4.8 0 4.8 3.6 q0 2.4 -2.2 3.2 l1 2 l-2.8 -1.6 q-5.6 0.2 -5.6 -3.6 z" fill="#4f4f4f"/><circle cx="793.2" cy="427.6" r="0.7" fill="#eee"/><circle cx="795.4" cy="427.6" r="0.7" fill="#eee"/><circle cx="797.6" cy="427.6" r="0.7" fill="#eee"/>
</svg>
</div></body></html>
